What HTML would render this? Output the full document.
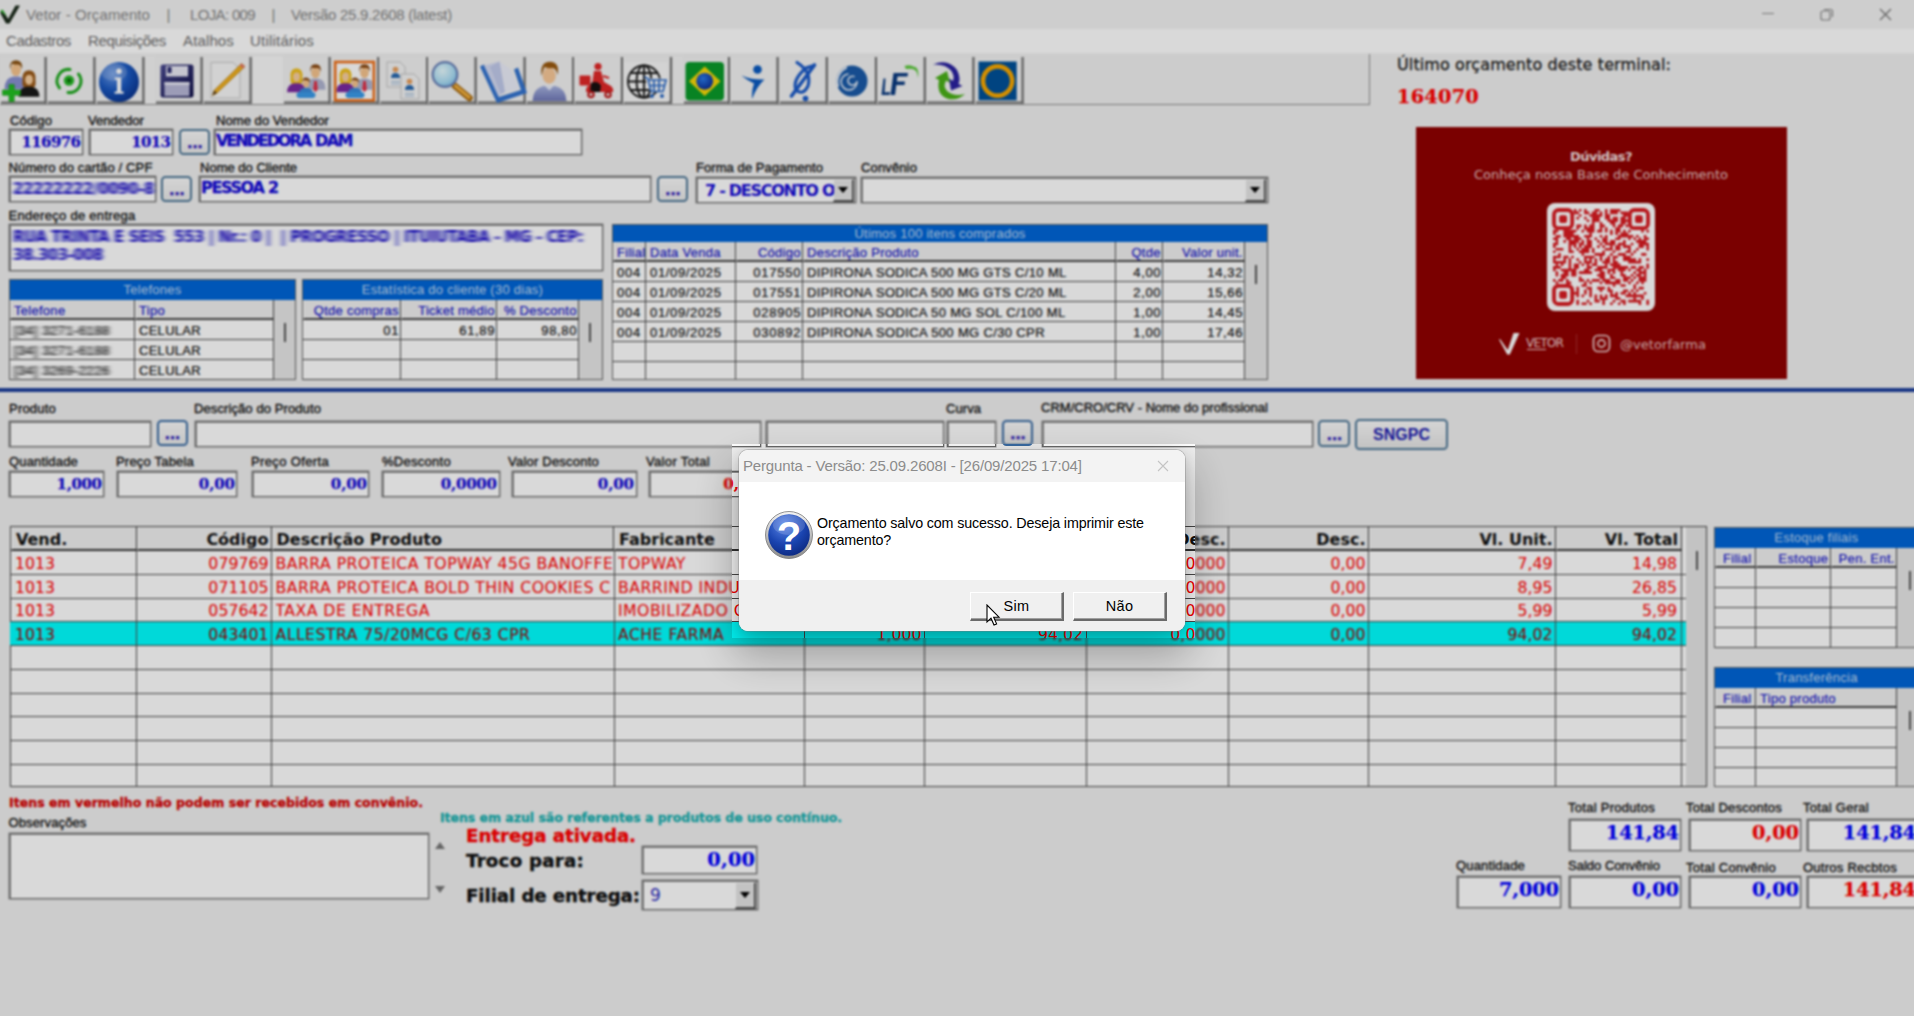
<!DOCTYPE html>
<html lang="pt-BR"><head><meta charset="utf-8"><title>Vetor - Orçamento</title>
<style>
html,body{margin:0;padding:0;width:1914px;height:1016px;overflow:hidden;background:#ccc}
#bg,#holein{position:absolute;left:0;top:0;width:1914px;height:1016px;display:block}
#bg{filter:blur(1.15px)}
#bg div,#bg span,#holein div,#holein span{position:absolute;box-sizing:border-box;white-space:nowrap}
#bg svg,#hole svg{display:block}
#dim{position:absolute;left:0;top:0;width:1914px;height:1016px;background:rgba(0,0,0,.15)}
#hole{position:absolute;left:732px;top:444px;width:463px;height:194px;overflow:hidden}
#holein{left:-732px;top:-444px}

#shadow{position:absolute;left:739px;top:450px;width:446px;height:181px;border-radius:9px;box-shadow:0 20px 42px 6px rgba(0,0,0,.27),0 4px 14px rgba(0,0,0,.16)}
#dlg{position:absolute;left:739px;top:450px;width:446px;height:181px;border-radius:9px;overflow:hidden;background:#fff;font-family:"Liberation Sans",sans-serif;box-shadow:0 0 0 1px rgba(120,120,120,.35)}
#dlg .tb{position:absolute;left:0;top:0;width:446px;height:32px;background:#f3f3f3}
#dlg .tt{position:absolute;left:4px;top:8px;font-size:15px;line-height:16px;color:#8c8c8c;white-space:nowrap;letter-spacing:-.16px}
#dlg .ft{position:absolute;left:0;top:130px;width:446px;height:51px;background:#f0f0f0}
#dlg .msg{position:absolute;left:78px;top:65px;font-size:14.3px;line-height:16.5px;color:#000;white-space:nowrap;letter-spacing:-.14px}
#dlg .btn{position:absolute;top:142px;width:94px;height:28.5px;box-sizing:border-box;background:#f0f0f0;border-top:1px solid #fff;border-left:1px solid #fff;border-right:2px solid #6a6a6a;border-bottom:2px solid #6a6a6a;box-shadow:inset -1px -1px 0 #a0a0a0;font-size:14.5px;line-height:26px;text-align:center;color:#000;letter-spacing:.3px}
</style></head><body>
<svg width="0" height="0" style="position:absolute"><defs><filter id="smear" x="-5%" y="-30%" width="110%" height="160%"><feGaussianBlur stdDeviation="2.3 0.6"/></filter><filter id="smear2" x="-5%" y="-30%" width="110%" height="160%"><feGaussianBlur stdDeviation="1.9 0.5"/></filter></defs></svg>
<div id="bg">
<div style="left:-20px;top:-20px;width:1954px;height:49px;background:#f3f3f3"></div>
<div style="left:-20px;top:29px;width:1954px;height:22.5px;background:#fff"></div>
<div style="left:-20px;top:51.5px;width:1954px;height:984px;background:#f0f0f0"></div>
<div style="left:-20px;top:51.5px;width:1954px;height:3.5px;background:linear-gradient(#fff,#f0f0f0)"></div>
<div style="left:0px;top:3px;width:22px;height:22px"><svg width="22" height="22" viewBox="0 0 22 22"><path d="M0 9.5L3 8L8.2 16L15.5 2.5H20L9.5 20.5H6Z" fill="#1b2a1b"/><path d="M0 8L2.6 6.5L7 13.5Z" fill="#35b035"/></svg></div>
<span style='left:26px;top:7px;font:15px/1 "Liberation Sans",sans-serif;color:#858585;letter-spacing:0.085px;'>Vetor - Orçamento</span>
<span style='left:166.5px;top:7px;font:15px/1 "Liberation Sans",sans-serif;color:#858585;letter-spacing:0.094px;'>|</span>
<span style='left:190px;top:7px;font:15px/1 "Liberation Sans",sans-serif;color:#858585;letter-spacing:-0.655px;'>LOJA: 009</span>
<span style='left:271.5px;top:7px;font:15px/1 "Liberation Sans",sans-serif;color:#858585;letter-spacing:0.094px;'>|</span>
<span style='left:291px;top:7px;font:15px/1 "Liberation Sans",sans-serif;color:#858585;letter-spacing:-0.264px;'>Versão 25.9.2608 (latest)</span>
<div style="left:1755px;top:4px;width:150px;height:22px"><svg width="150" height="22"><path d="M7 9.5H19" stroke="#9a9a9a" stroke-width="1.2" fill="none"/><rect x="66" y="7" width="9" height="9" rx="2" fill="none" stroke="#888" stroke-width="1.2"/><path d="M69 5.5H75.5Q77.5 5.5 77.5 7.5V13" fill="none" stroke="#888" stroke-width="1.2"/><path d="M125 5L136 16M136 5L125 16" stroke="#777" stroke-width="1.3" fill="none"/></svg></div>
<span style='left:6px;top:33px;font:15px/1 "Liberation Sans",sans-serif;color:#707070;letter-spacing:-0.375px;'>Cadastros</span>
<span style='left:88px;top:33px;font:15px/1 "Liberation Sans",sans-serif;color:#707070;letter-spacing:-0.338px;'>Requisições</span>
<span style='left:183px;top:33px;font:15px/1 "Liberation Sans",sans-serif;color:#707070;letter-spacing:0.136px;'>Atalhos</span>
<span style='left:250px;top:33px;font:15px/1 "Liberation Sans",sans-serif;color:#707070;letter-spacing:0.210px;'>Utilitários</span>
<div style="left:0px;top:54px;width:1370px;height:51px;border-right:1px solid #8c8c8c;border-bottom:1px solid #8c8c8c;box-sizing:border-box"></div>
<div style="left:252.5px;top:56px;width:30px;height:48px;background:#f9f9f9"></div>
<div style="left:145px;top:56px;width:10px;height:48px;background:#f5f5f5"></div>
<div style="left:673px;top:56px;width:10px;height:48px;background:#f5f5f5"></div>
<div style="left:0px;top:54px;width:1030px;height:54px"><svg width="1030" height="54" viewBox="0 54 1030 54"><defs><radialGradient id="gi" cx=".35" cy=".3" r=".8"><stop offset="0" stop-color="#6a9ae8"/><stop offset=".5" stop-color="#1a58c0"/><stop offset="1" stop-color="#08308a"/></radialGradient><radialGradient id="gl" cx=".4" cy=".35" r=".7"><stop offset="0" stop-color="#e8fbff"/><stop offset=".7" stop-color="#a8dcf4"/><stop offset="1" stop-color="#78b8e8"/></radialGradient><linearGradient id="gf" x1="0" y1="0" x2="1" y2="1"><stop offset="0" stop-color="#4c4c92"/><stop offset="1" stop-color="#0c0c44"/></linearGradient><linearGradient id="gb" x1="0" y1="0" x2="0" y2="1"><stop offset="0" stop-color="#a8b4e0"/><stop offset="1" stop-color="#7078b8"/></linearGradient><radialGradient id="gbr" cx=".4" cy=".35" r=".7"><stop offset="0" stop-color="#2a7ae8"/><stop offset="1" stop-color="#0a2a90"/></radialGradient></defs><rect x="0" y="57" width="46.6" height="46.5" fill="#f2f2f2"/><path d="M45.6 57V103.5" stroke="#6e6e6e" stroke-width="2.2"/><path d="M1 102.6H46.6" stroke="#6e6e6e" stroke-width="2"/><rect x="47" y="57" width="48.400000000000006" height="46.5" fill="#f2f2f2"/><path d="M94.4 57V103.5" stroke="#6e6e6e" stroke-width="2.2"/><path d="M48 102.6H95.4" stroke="#6e6e6e" stroke-width="2"/><rect x="96" y="57" width="48.400000000000006" height="46.5" fill="#f2f2f2"/><path d="M143.4 57V103.5" stroke="#6e6e6e" stroke-width="2.2"/><path d="M97 102.6H144.4" stroke="#6e6e6e" stroke-width="2"/><rect x="155" y="57" width="47.599999999999994" height="46.5" fill="#f2f2f2"/><path d="M201.6 57V103.5" stroke="#6e6e6e" stroke-width="2.2"/><path d="M156 102.6H202.6" stroke="#6e6e6e" stroke-width="2"/><rect x="203" y="57" width="48.599999999999994" height="46.5" fill="#f2f2f2"/><path d="M250.6 57V103.5" stroke="#6e6e6e" stroke-width="2.2"/><path d="M204 102.6H251.6" stroke="#6e6e6e" stroke-width="2"/><rect x="283" y="57" width="47.60000000000002" height="46.5" fill="#f2f2f2"/><path d="M329.6 57V103.5" stroke="#6e6e6e" stroke-width="2.2"/><path d="M284 102.6H330.6" stroke="#6e6e6e" stroke-width="2"/><rect x="331" y="57" width="48.19999999999999" height="46.5" fill="#f2f2f2"/><path d="M378.2 57V103.5" stroke="#6e6e6e" stroke-width="2.2"/><path d="M332 102.6H379.2" stroke="#6e6e6e" stroke-width="2"/><rect x="379.5" y="57" width="48.69999999999999" height="46.5" fill="#f2f2f2"/><path d="M427.2 57V103.5" stroke="#6e6e6e" stroke-width="2.2"/><path d="M380.5 102.6H428.2" stroke="#6e6e6e" stroke-width="2"/><rect x="428" y="57" width="48.60000000000002" height="46.5" fill="#f2f2f2"/><path d="M475.6 57V103.5" stroke="#6e6e6e" stroke-width="2.2"/><path d="M429 102.6H476.6" stroke="#6e6e6e" stroke-width="2"/><rect x="477" y="57" width="48.60000000000002" height="46.5" fill="#f2f2f2"/><path d="M524.6 57V103.5" stroke="#6e6e6e" stroke-width="2.2"/><path d="M478 102.6H525.6" stroke="#6e6e6e" stroke-width="2"/><rect x="526" y="57" width="48.200000000000045" height="46.5" fill="#f2f2f2"/><path d="M573.2 57V103.5" stroke="#6e6e6e" stroke-width="2.2"/><path d="M527 102.6H574.2" stroke="#6e6e6e" stroke-width="2"/><rect x="574" y="57" width="49" height="46.5" fill="#f2f2f2"/><path d="M622 57V103.5" stroke="#6e6e6e" stroke-width="2.2"/><path d="M575 102.6H623" stroke="#6e6e6e" stroke-width="2"/><rect x="623" y="57" width="49" height="46.5" fill="#f2f2f2"/><path d="M671 57V103.5" stroke="#6e6e6e" stroke-width="2.2"/><path d="M624 102.6H672" stroke="#6e6e6e" stroke-width="2"/><rect x="683" y="57" width="47" height="46.5" fill="#f2f2f2"/><path d="M729 57V103.5" stroke="#6e6e6e" stroke-width="2.2"/><path d="M684 102.6H730" stroke="#6e6e6e" stroke-width="2"/><rect x="730" y="57" width="48.60000000000002" height="46.5" fill="#f2f2f2"/><path d="M777.6 57V103.5" stroke="#6e6e6e" stroke-width="2.2"/><path d="M731 102.6H778.6" stroke="#6e6e6e" stroke-width="2"/><rect x="779" y="57" width="48.799999999999955" height="46.5" fill="#f2f2f2"/><path d="M826.8 57V103.5" stroke="#6e6e6e" stroke-width="2.2"/><path d="M780 102.6H827.8" stroke="#6e6e6e" stroke-width="2"/><rect x="828" y="57" width="49" height="46.5" fill="#f2f2f2"/><path d="M876 57V103.5" stroke="#6e6e6e" stroke-width="2.2"/><path d="M829 102.6H877" stroke="#6e6e6e" stroke-width="2"/><rect x="877" y="57" width="48.799999999999955" height="46.5" fill="#f2f2f2"/><path d="M924.8 57V103.5" stroke="#6e6e6e" stroke-width="2.2"/><path d="M878 102.6H925.8" stroke="#6e6e6e" stroke-width="2"/><rect x="926" y="57" width="48.39999999999998" height="46.5" fill="#f2f2f2"/><path d="M973.4 57V103.5" stroke="#6e6e6e" stroke-width="2.2"/><path d="M927 102.6H974.4" stroke="#6e6e6e" stroke-width="2"/><rect x="975" y="57" width="48.60000000000002" height="46.5" fill="#f2f2f2"/><path d="M1022.6 57V103.5" stroke="#6e6e6e" stroke-width="2.2"/><path d="M976 102.6H1023.6" stroke="#6e6e6e" stroke-width="2"/><g transform="translate(16 61) scale(1.05)">
<path d="M-11 27Q-11 16 -3 15H3Q11 16 11 27Z" fill="#8890d0"/>
<path d="M-3 15L0 19L3 15Z" fill="#8890d0"/>
<ellipse cx="0" cy="8.3" rx="4.7" ry="6" fill="#f6c48e"/>
<path d="M-5.6 8Q-6.8 -0.6 0 -0.8Q7 -0.6 5.6 8Q5 3.6 2 3.3Q-2.6 3.6 -4 2.6Q-5.2 5 -5.6 8Z" fill="#8a5212"/>
</g><g transform="translate(29 71) scale(0.95)">
<path d="M-6.8 10Q-8 -0.6 0 -0.8Q8 -0.6 6.8 10Q7.6 15.5 5 17.5H-5Q-7.6 15.5 -6.8 10Z" fill="#9a5a1a"/>
<path d="M-11 27Q-11 18 -3 16.5H3Q11 18 11 27Z" fill="#181818"/>
<ellipse cx="0" cy="9" rx="4.1" ry="5.6" fill="#f8cfa0"/>
<path d="M-4.3 7Q-2.6 2.4 4.2 4.6Q2.6 1 0 1.2Q-4.3 1.4 -4.3 7Z" fill="#9a5a1a"/>
</g><path d="M9 84.5h5.2v5.5h6.3v5.2h-6.3v6.3h-5.2v-6.3h-6.5v-5.2h6.5z" fill="#22c022" stroke="#109010" stroke-width=".6"/><g fill="none" stroke="#22aa22" stroke-width="3" stroke-linecap="round"><path d="M59.5 88A11.5 11.5 0 0 1 70 69.5"/><path d="M78.5 74A11.5 11.5 0 0 1 68 92.5"/></g><circle cx="69" cy="80.5" r="5.2" fill="#28b828"/><circle cx="69" cy="80.5" r="2" fill="#0a6a0a"/><circle cx="119" cy="82" r="20" fill="url(#gi)"/><ellipse cx="114" cy="72" rx="13" ry="9" fill="#fff" opacity=".18"/><circle cx="119" cy="71.3" r="2.7" fill="#fff"/><path d="M114.8 77.5H121.2V91.5H123.6V93.8H114.6V91.5H117V79.8H114.8Z" fill="#fff"/><rect x="160.5" y="64.5" width="33" height="33" rx="2.5" fill="url(#gf)"/><rect x="166" y="66" width="22" height="10.5" fill="#e8e8f4"/><rect x="167.5" y="67" width="4" height="6" fill="#2a2a70"/><rect x="164.5" y="82" width="25" height="14" fill="#b8b8d8"/><rect x="164.5" y="82" width="25" height="3" fill="#e6e6f4"/><path d="M211 62.5H233L240 69V98H211Z" fill="#f7f7f7" stroke="#bdbdbd" stroke-width=".8"/><path d="M241.5 63.5L245 66.5L217 93L212.5 95.5L214 90.5Z" fill="#f0b020" stroke="#b07810" stroke-width=".7"/><path d="M241.5 63.5L245 66.5L243 68.5L239.5 65.5Z" fill="#e87868"/><path d="M212.5 95.5L214 90.5L217 93Z" fill="#5a4020"/><g transform="translate(296.5 69) scale(0.86)">
<path d="M-6.8 10Q-8 -0.6 0 -0.8Q8 -0.6 6.8 10Q7.6 15.5 5 17.5H-5Q-7.6 15.5 -6.8 10Z" fill="#f0c020"/>
<path d="M-11 27Q-11 18 -3 16.5H3Q11 18 11 27Z" fill="#7a2aa0"/>
<ellipse cx="0" cy="9" rx="4.1" ry="5.6" fill="#f8cfa0"/>
<path d="M-4.3 7Q-2.6 2.4 4.2 4.6Q2.6 1 0 1.2Q-4.3 1.4 -4.3 7Z" fill="#f0c020"/>
</g><g><g transform="translate(315.5 65) scale(0.92)">
<path d="M-11 27Q-11 16 -3 15H3Q11 16 11 27Z" fill="#b0b4d0"/>
<path d="M-3 15L0 19L3 15Z" fill="#b0b4d0"/>
<ellipse cx="0" cy="8.3" rx="4.7" ry="6" fill="#f6c48e"/>
<path d="M-5.6 8Q-6.8 -0.6 0 -0.8Q7 -0.6 5.6 8Q5 3.6 2 3.3Q-2.6 3.6 -4 2.6Q-5.2 5 -5.6 8Z" fill="#8a4a14"/>
</g><path d="M314.2 81H316.8L317.8 89.5L315.5 92L313.2 89.5Z" fill="#e03048"/></g><g transform="translate(306 78) scale(0.66)">
<path d="M-11 27Q-11 16 -3 15H3Q11 16 11 27Z" fill="#3a8ad8"/>
<path d="M-3 15L0 19L3 15Z" fill="#3a8ad8"/>
<ellipse cx="0" cy="8.3" rx="4.7" ry="6" fill="#f6c48e"/>
<path d="M-5.6 8Q-6.8 -0.6 0 -0.8Q7 -0.6 5.6 8Q5 3.6 2 3.3Q-2.6 3.6 -4 2.6Q-5.2 5 -5.6 8Z" fill="#8a4a14"/>
</g><rect x="296.5" y="92.3" width="19" height="5.6" rx="2.8" fill="#3a9ae8"/><rect x="335.2" y="62" width="38.6" height="38.4" fill="#fff" stroke="#f07018" stroke-width="2.6"/><clipPath id="fc"><rect x="336.5" y="63.3" width="36" height="35.8"/></clipPath><g clip-path="url(#fc)"><g transform="translate(345.5 69) scale(0.86)">
<path d="M-6.8 10Q-8 -0.6 0 -0.8Q8 -0.6 6.8 10Q7.6 15.5 5 17.5H-5Q-7.6 15.5 -6.8 10Z" fill="#f0c020"/>
<path d="M-11 27Q-11 18 -3 16.5H3Q11 18 11 27Z" fill="#7a2aa0"/>
<ellipse cx="0" cy="9" rx="4.1" ry="5.6" fill="#f8cfa0"/>
<path d="M-4.3 7Q-2.6 2.4 4.2 4.6Q2.6 1 0 1.2Q-4.3 1.4 -4.3 7Z" fill="#f0c020"/>
</g><g><g transform="translate(364.5 65) scale(0.92)">
<path d="M-11 27Q-11 16 -3 15H3Q11 16 11 27Z" fill="#b0b4d0"/>
<path d="M-3 15L0 19L3 15Z" fill="#b0b4d0"/>
<ellipse cx="0" cy="8.3" rx="4.7" ry="6" fill="#f6c48e"/>
<path d="M-5.6 8Q-6.8 -0.6 0 -0.8Q7 -0.6 5.6 8Q5 3.6 2 3.3Q-2.6 3.6 -4 2.6Q-5.2 5 -5.6 8Z" fill="#8a4a14"/>
</g><path d="M363.2 81H365.8L366.8 89.5L364.5 92L362.2 89.5Z" fill="#e03048"/></g><g transform="translate(355 78) scale(0.66)">
<path d="M-11 27Q-11 16 -3 15H3Q11 16 11 27Z" fill="#3a8ad8"/>
<path d="M-3 15L0 19L3 15Z" fill="#3a8ad8"/>
<ellipse cx="0" cy="8.3" rx="4.7" ry="6" fill="#f6c48e"/>
<path d="M-5.6 8Q-6.8 -0.6 0 -0.8Q7 -0.6 5.6 8Q5 3.6 2 3.3Q-2.6 3.6 -4 2.6Q-5.2 5 -5.6 8Z" fill="#8a4a14"/>
</g><rect x="345.5" y="92.3" width="19" height="5.6" rx="2.8" fill="#3a9ae8"/></g><path d="M387 62H400L405 67V87H387Z" fill="#f4f4f4" stroke="#b8b8b8" stroke-width=".8"/><circle cx="395.5" cy="69.5" r="2.8" fill="#e8a060"/><path d="M391 78Q391 73 395.5 73Q400 73 400 78Z" fill="#2a6ab0"/><path d="M391 81.5H400M391 84H400" stroke="#9ab8d8" stroke-width="1"/><path d="M401 74H414L419 79V99H401Z" fill="#f4f4f4" stroke="#b8b8b8" stroke-width=".8"/><circle cx="409.5" cy="81.5" r="2.8" fill="#e8a060"/><path d="M405 90Q405 85 409.5 85Q414 85 414 90Z" fill="#2a6ab0"/><path d="M405 93.5H414M405 96H414" stroke="#9ab8d8" stroke-width="1"/><path d="M455 86L469.5 98" stroke="#a86a10" stroke-width="6.5" stroke-linecap="round"/><path d="M455.5 86L469 97.3" stroke="#f0b040" stroke-width="3.2" stroke-linecap="round"/><circle cx="445" cy="74.5" r="12.3" fill="url(#gl)" stroke="#6a82b8" stroke-width="2.2"/><path d="M480 66.5L484 64.5L499 97L521 90L514 69.5L518 67.5L527 93L497 103Z" fill="#3474d0"/><path d="M484 65.5L499.5 61.5L505 92L498.5 96.5Z" fill="#d4daf2"/><path d="M499.5 61.5L510 68.5L519.5 89L505 92Z" fill="#eceef9"/><path d="M490 67L499.5 61.5L505 92L501 94Z" fill="#bcc6ea" opacity=".8"/><path d="M532.5 101Q533 88.5 543 86H555.5Q566 88.5 566.5 101Z" fill="url(#gb)"/><path d="M545 86L549.3 90.5L553.5 86Z" fill="#e8ecf8"/><ellipse cx="549.2" cy="75.5" rx="6.6" ry="8.2" fill="#f8c898"/><path d="M541.6 76Q539.5 62 550 61.8Q560 62 557.6 75Q556.5 68.5 552.5 68Q546.5 68.5 544.5 67Q542.6 71 541.6 76Z" fill="#9a5a10"/><g fill="#e02828"><rect x="579.5" y="75.5" width="11" height="10" rx="1"/><circle cx="598" cy="66.5" r="3.6"/><path d="M594 71H601L604 82L611 86Q614 89 613 92H586Q585 86 592 84Z"/><path d="M603 76L609 78" stroke="#e02828" stroke-width="2"/></g><path d="M591 83Q598 80 601 86L600 92H590Z" fill="#181010"/><circle cx="591" cy="94.5" r="3.8" fill="#c02020"/><circle cx="608" cy="94.5" r="3.8" fill="#c02020"/><circle cx="591" cy="94.5" r="1.5" fill="#eee"/><circle cx="608" cy="94.5" r="1.5" fill="#eee"/><rect x="624" y="62" width="44" height="40" fill="#f8f8f8"/><g fill="none" stroke="#1a1a1a" stroke-width="1.9"><circle cx="644" cy="81.5" r="16"/><ellipse cx="644" cy="81.5" rx="7.5" ry="16"/><path d="M644 65.5V97.5M628 81.5H660M630.5 73H657.5M630.5 90H657.5"/></g><path d="M645 78.5H666L663 91H650Z" fill="#f8f8f8"/><g fill="none" stroke="#2a6ac8" stroke-width="1.7"><path d="M644.5 77L648 78.5L651 91.5H663L666 80H649M654 80.5V91M659 80.5V91M650 85.5H664.5"/></g><circle cx="652" cy="96" r="2" fill="#2a6ac8"/><circle cx="662" cy="96" r="2" fill="#2a6ac8"/><rect x="685.5" y="62" width="38.5" height="38.5" rx="4" fill="#0a9a2a"/><path d="M689 81.3L704.7 66.5L720.5 81.3L704.7 96Z" fill="#f8d808"/><circle cx="704.7" cy="81.3" r="8.4" fill="url(#gbr)"/><circle cx="757.5" cy="69.5" r="4.3" fill="#0a5ac0"/><path d="M741.5 75.5Q752 80 764.5 79.5Q757 86 752 99Q751.5 90 754 83.5Q747 80 741.5 75.5Z" fill="#0a5ac0"/><g fill="none" stroke="#1a5ac8" stroke-linecap="round"><path d="M797 62.5Q812 72 808 86Q803 96 796 90Q792 80 806 68L814 65.5" stroke-width="3.1"/><path d="M814.5 65L791.5 96" stroke-width="3.6"/></g><circle cx="805.5" cy="98.5" r="2.8" fill="#1a5ac8"/><circle cx="852" cy="81" r="15.5" fill="#1a5aa8"/><g fill="none" stroke="#dfe8f4" stroke-width="1.6" stroke-linecap="round"><path d="M854 76.5A4.5 4.5 0 1 0 857 81A8 8 0 1 1 848 74"/><path d="M838 86A15 15 0 0 1 846 68" stroke-width="2.2"/></g><path d="M904.5 66Q914 63 918 72Q915 67.5 906 69Z" fill="#5ac83a"/><path d="M913 69Q917.5 70 918 78Q919.5 70 915 66.5Z" fill="#5ac83a"/><path d="M883.5 78.5L885.5 78.5L884.5 92.5L890 92L889.5 95L881.5 95Z" fill="#0a3a80"/><path d="M893.5 73H908L907.5 76.5H897.5L896.8 81.5H905L904.5 85H896.3L895 95H890.5Z" fill="#0a3a80"/><path d="M933 64.5Q948 58 957 70Q961 78 958.5 84L962.5 86L951 90.5L949 78.5L953 81Q955 76 951 70.5Q945 63.5 933 64.5Z" fill="#2a22a0"/><path d="M947 71L950 83L946.3 80.5Q942.5 86 947 91Q954 97 965 94Q957 101.5 947 98.5Q936 94 939 80L935 78Z" fill="#4ab018"/><rect x="978.5" y="61.5" width="38.2" height="38.8" fill="#005098"/><circle cx="997.6" cy="81" r="14.6" fill="none" stroke="#f8a800" stroke-width="4.6"/></svg></div>
<span style='left:1397px;top:57px;font:16px/1 "DejaVu Sans","Liberation Sans",sans-serif;color:#1c1c1c;letter-spacing:0.111px;-webkit-text-stroke:.3px #1c1c1c;'>Último orçamento deste terminal:</span>
<span style='left:1397px;top:86.5px;font:bold 19.3px/1 "DejaVu Serif","Liberation Serif",serif;color:#ff0000;letter-spacing:0.250px;-webkit-text-stroke:.25px #ff0000;'>164070</span>
<div style="left:1416px;top:127px;width:371px;height:252px;background:#900000"></div>
<span style='left:1570px;top:150px;font:bold 13px/1 "DejaVu Sans","Liberation Sans",sans-serif;color:#f4e4e4;letter-spacing:-0.543px;'>Dúvidas?</span>
<span style='left:1474px;top:168px;font:13px/1 "DejaVu Sans","Liberation Sans",sans-serif;color:#e6c8c8;letter-spacing:0.030px;'>Conheça nossa Base de Conhecimento</span>
<div style="left:1547px;top:203px;width:108px;height:108px"><svg width="108" height="108"><rect x="0" y="0" width="108" height="108" rx="8" fill="#fff"/><path d="M6.0 26.8h2.6v2.6h-2.6zM6.0 29.4h2.6v2.6h-2.6zM6.0 34.5h2.6v2.6h-2.6zM6.0 39.7h2.6v2.6h-2.6zM6.0 42.3h2.6v2.6h-2.6zM6.0 47.5h2.6v2.6h-2.6zM6.0 52.7h2.6v2.6h-2.6zM6.0 55.3h2.6v2.6h-2.6zM6.0 57.9h2.6v2.6h-2.6zM6.0 63.1h2.6v2.6h-2.6zM6.0 65.7h2.6v2.6h-2.6zM6.0 76.1h2.6v2.6h-2.6zM8.6 26.8h2.6v2.6h-2.6zM8.6 31.9h2.6v2.6h-2.6zM8.6 34.5h2.6v2.6h-2.6zM8.6 37.1h2.6v2.6h-2.6zM8.6 39.7h2.6v2.6h-2.6zM8.6 44.9h2.6v2.6h-2.6zM8.6 52.7h2.6v2.6h-2.6zM8.6 57.9h2.6v2.6h-2.6zM8.6 60.5h2.6v2.6h-2.6zM8.6 63.1h2.6v2.6h-2.6zM8.6 68.3h2.6v2.6h-2.6zM8.6 70.9h2.6v2.6h-2.6zM8.6 78.6h2.6v2.6h-2.6zM11.2 31.9h2.6v2.6h-2.6zM11.2 44.9h2.6v2.6h-2.6zM11.2 50.1h2.6v2.6h-2.6zM11.2 52.7h2.6v2.6h-2.6zM11.2 57.9h2.6v2.6h-2.6zM11.2 63.1h2.6v2.6h-2.6zM11.2 76.1h2.6v2.6h-2.6zM13.8 44.9h2.6v2.6h-2.6zM13.8 57.9h2.6v2.6h-2.6zM13.8 60.5h2.6v2.6h-2.6zM13.8 65.7h2.6v2.6h-2.6zM13.8 70.9h2.6v2.6h-2.6zM13.8 73.5h2.6v2.6h-2.6zM13.8 76.1h2.6v2.6h-2.6zM16.4 26.8h2.6v2.6h-2.6zM16.4 29.4h2.6v2.6h-2.6zM16.4 31.9h2.6v2.6h-2.6zM16.4 37.1h2.6v2.6h-2.6zM16.4 52.7h2.6v2.6h-2.6zM16.4 55.3h2.6v2.6h-2.6zM16.4 57.9h2.6v2.6h-2.6zM16.4 65.7h2.6v2.6h-2.6zM16.4 68.3h2.6v2.6h-2.6zM16.4 70.9h2.6v2.6h-2.6zM16.4 73.5h2.6v2.6h-2.6zM19.0 26.8h2.6v2.6h-2.6zM19.0 29.4h2.6v2.6h-2.6zM19.0 31.9h2.6v2.6h-2.6zM19.0 34.5h2.6v2.6h-2.6zM19.0 52.7h2.6v2.6h-2.6zM19.0 65.7h2.6v2.6h-2.6zM19.0 68.3h2.6v2.6h-2.6zM19.0 70.9h2.6v2.6h-2.6zM19.0 76.1h2.6v2.6h-2.6zM19.0 78.6h2.6v2.6h-2.6zM21.6 26.8h2.6v2.6h-2.6zM21.6 29.4h2.6v2.6h-2.6zM21.6 31.9h2.6v2.6h-2.6zM21.6 34.5h2.6v2.6h-2.6zM21.6 37.1h2.6v2.6h-2.6zM21.6 39.7h2.6v2.6h-2.6zM21.6 42.3h2.6v2.6h-2.6zM21.6 44.9h2.6v2.6h-2.6zM21.6 47.5h2.6v2.6h-2.6zM21.6 55.3h2.6v2.6h-2.6zM21.6 57.9h2.6v2.6h-2.6zM21.6 60.5h2.6v2.6h-2.6zM21.6 63.1h2.6v2.6h-2.6zM21.6 65.7h2.6v2.6h-2.6zM21.6 78.6h2.6v2.6h-2.6zM24.2 26.8h2.6v2.6h-2.6zM24.2 29.4h2.6v2.6h-2.6zM24.2 31.9h2.6v2.6h-2.6zM24.2 37.1h2.6v2.6h-2.6zM24.2 39.7h2.6v2.6h-2.6zM24.2 47.5h2.6v2.6h-2.6zM24.2 52.7h2.6v2.6h-2.6zM24.2 65.7h2.6v2.6h-2.6zM24.2 68.3h2.6v2.6h-2.6zM24.2 70.9h2.6v2.6h-2.6zM26.8 6.0h2.6v2.6h-2.6zM26.8 8.6h2.6v2.6h-2.6zM26.8 26.8h2.6v2.6h-2.6zM26.8 31.9h2.6v2.6h-2.6zM26.8 34.5h2.6v2.6h-2.6zM26.8 37.1h2.6v2.6h-2.6zM26.8 39.7h2.6v2.6h-2.6zM26.8 42.3h2.6v2.6h-2.6zM26.8 60.5h2.6v2.6h-2.6zM26.8 63.1h2.6v2.6h-2.6zM26.8 65.7h2.6v2.6h-2.6zM26.8 68.3h2.6v2.6h-2.6zM26.8 70.9h2.6v2.6h-2.6zM26.8 89.0h2.6v2.6h-2.6zM29.4 8.6h2.6v2.6h-2.6zM29.4 13.8h2.6v2.6h-2.6zM29.4 21.6h2.6v2.6h-2.6zM29.4 24.2h2.6v2.6h-2.6zM29.4 31.9h2.6v2.6h-2.6zM29.4 34.5h2.6v2.6h-2.6zM29.4 37.1h2.6v2.6h-2.6zM29.4 44.9h2.6v2.6h-2.6zM29.4 55.3h2.6v2.6h-2.6zM29.4 60.5h2.6v2.6h-2.6zM29.4 63.1h2.6v2.6h-2.6zM29.4 83.8h2.6v2.6h-2.6zM29.4 86.4h2.6v2.6h-2.6zM29.4 89.0h2.6v2.6h-2.6zM29.4 91.6h2.6v2.6h-2.6zM29.4 96.8h2.6v2.6h-2.6zM29.4 99.4h2.6v2.6h-2.6zM31.9 6.0h2.6v2.6h-2.6zM31.9 11.2h2.6v2.6h-2.6zM31.9 21.6h2.6v2.6h-2.6zM31.9 34.5h2.6v2.6h-2.6zM31.9 39.7h2.6v2.6h-2.6zM31.9 42.3h2.6v2.6h-2.6zM31.9 47.5h2.6v2.6h-2.6zM31.9 57.9h2.6v2.6h-2.6zM31.9 68.3h2.6v2.6h-2.6zM31.9 73.5h2.6v2.6h-2.6zM31.9 76.1h2.6v2.6h-2.6zM34.5 26.8h2.6v2.6h-2.6zM34.5 37.1h2.6v2.6h-2.6zM34.5 39.7h2.6v2.6h-2.6zM34.5 44.9h2.6v2.6h-2.6zM34.5 47.5h2.6v2.6h-2.6zM34.5 50.1h2.6v2.6h-2.6zM34.5 60.5h2.6v2.6h-2.6zM34.5 68.3h2.6v2.6h-2.6zM34.5 76.1h2.6v2.6h-2.6zM34.5 81.2h2.6v2.6h-2.6zM34.5 91.6h2.6v2.6h-2.6zM34.5 99.4h2.6v2.6h-2.6zM37.1 6.0h2.6v2.6h-2.6zM37.1 8.6h2.6v2.6h-2.6zM37.1 13.8h2.6v2.6h-2.6zM37.1 21.6h2.6v2.6h-2.6zM37.1 24.2h2.6v2.6h-2.6zM37.1 31.9h2.6v2.6h-2.6zM37.1 42.3h2.6v2.6h-2.6zM37.1 44.9h2.6v2.6h-2.6zM37.1 47.5h2.6v2.6h-2.6zM37.1 52.7h2.6v2.6h-2.6zM37.1 55.3h2.6v2.6h-2.6zM37.1 57.9h2.6v2.6h-2.6zM37.1 65.7h2.6v2.6h-2.6zM37.1 68.3h2.6v2.6h-2.6zM37.1 78.6h2.6v2.6h-2.6zM37.1 81.2h2.6v2.6h-2.6zM37.1 86.4h2.6v2.6h-2.6zM37.1 89.0h2.6v2.6h-2.6zM37.1 99.4h2.6v2.6h-2.6zM39.7 8.6h2.6v2.6h-2.6zM39.7 16.4h2.6v2.6h-2.6zM39.7 24.2h2.6v2.6h-2.6zM39.7 26.8h2.6v2.6h-2.6zM39.7 31.9h2.6v2.6h-2.6zM39.7 34.5h2.6v2.6h-2.6zM39.7 37.1h2.6v2.6h-2.6zM39.7 39.7h2.6v2.6h-2.6zM39.7 42.3h2.6v2.6h-2.6zM39.7 44.9h2.6v2.6h-2.6zM39.7 47.5h2.6v2.6h-2.6zM39.7 52.7h2.6v2.6h-2.6zM39.7 57.9h2.6v2.6h-2.6zM39.7 60.5h2.6v2.6h-2.6zM39.7 63.1h2.6v2.6h-2.6zM39.7 65.7h2.6v2.6h-2.6zM39.7 68.3h2.6v2.6h-2.6zM39.7 76.1h2.6v2.6h-2.6zM39.7 83.8h2.6v2.6h-2.6zM39.7 96.8h2.6v2.6h-2.6zM42.3 11.2h2.6v2.6h-2.6zM42.3 21.6h2.6v2.6h-2.6zM42.3 24.2h2.6v2.6h-2.6zM42.3 26.8h2.6v2.6h-2.6zM42.3 29.4h2.6v2.6h-2.6zM42.3 31.9h2.6v2.6h-2.6zM42.3 37.1h2.6v2.6h-2.6zM42.3 39.7h2.6v2.6h-2.6zM42.3 42.3h2.6v2.6h-2.6zM42.3 52.7h2.6v2.6h-2.6zM42.3 55.3h2.6v2.6h-2.6zM42.3 57.9h2.6v2.6h-2.6zM42.3 63.1h2.6v2.6h-2.6zM42.3 68.3h2.6v2.6h-2.6zM42.3 78.6h2.6v2.6h-2.6zM42.3 83.8h2.6v2.6h-2.6zM42.3 86.4h2.6v2.6h-2.6zM42.3 89.0h2.6v2.6h-2.6zM42.3 91.6h2.6v2.6h-2.6zM42.3 99.4h2.6v2.6h-2.6zM44.9 8.6h2.6v2.6h-2.6zM44.9 11.2h2.6v2.6h-2.6zM44.9 13.8h2.6v2.6h-2.6zM44.9 16.4h2.6v2.6h-2.6zM44.9 19.0h2.6v2.6h-2.6zM44.9 21.6h2.6v2.6h-2.6zM44.9 24.2h2.6v2.6h-2.6zM44.9 26.8h2.6v2.6h-2.6zM44.9 44.9h2.6v2.6h-2.6zM44.9 47.5h2.6v2.6h-2.6zM44.9 52.7h2.6v2.6h-2.6zM44.9 60.5h2.6v2.6h-2.6zM44.9 76.1h2.6v2.6h-2.6zM47.5 6.0h2.6v2.6h-2.6zM47.5 8.6h2.6v2.6h-2.6zM47.5 11.2h2.6v2.6h-2.6zM47.5 13.8h2.6v2.6h-2.6zM47.5 16.4h2.6v2.6h-2.6zM47.5 34.5h2.6v2.6h-2.6zM47.5 50.1h2.6v2.6h-2.6zM47.5 55.3h2.6v2.6h-2.6zM47.5 57.9h2.6v2.6h-2.6zM47.5 60.5h2.6v2.6h-2.6zM47.5 65.7h2.6v2.6h-2.6zM47.5 76.1h2.6v2.6h-2.6zM47.5 91.6h2.6v2.6h-2.6zM47.5 94.2h2.6v2.6h-2.6zM47.5 96.8h2.6v2.6h-2.6zM50.1 6.0h2.6v2.6h-2.6zM50.1 11.2h2.6v2.6h-2.6zM50.1 13.8h2.6v2.6h-2.6zM50.1 16.4h2.6v2.6h-2.6zM50.1 26.8h2.6v2.6h-2.6zM50.1 37.1h2.6v2.6h-2.6zM50.1 42.3h2.6v2.6h-2.6zM50.1 50.1h2.6v2.6h-2.6zM50.1 63.1h2.6v2.6h-2.6zM50.1 65.7h2.6v2.6h-2.6zM50.1 70.9h2.6v2.6h-2.6zM50.1 76.1h2.6v2.6h-2.6zM50.1 83.8h2.6v2.6h-2.6zM50.1 96.8h2.6v2.6h-2.6zM52.7 8.6h2.6v2.6h-2.6zM52.7 11.2h2.6v2.6h-2.6zM52.7 19.0h2.6v2.6h-2.6zM52.7 21.6h2.6v2.6h-2.6zM52.7 24.2h2.6v2.6h-2.6zM52.7 26.8h2.6v2.6h-2.6zM52.7 31.9h2.6v2.6h-2.6zM52.7 39.7h2.6v2.6h-2.6zM52.7 50.1h2.6v2.6h-2.6zM52.7 52.7h2.6v2.6h-2.6zM52.7 55.3h2.6v2.6h-2.6zM52.7 63.1h2.6v2.6h-2.6zM52.7 65.7h2.6v2.6h-2.6zM52.7 68.3h2.6v2.6h-2.6zM52.7 70.9h2.6v2.6h-2.6zM52.7 73.5h2.6v2.6h-2.6zM52.7 78.6h2.6v2.6h-2.6zM52.7 83.8h2.6v2.6h-2.6zM52.7 86.4h2.6v2.6h-2.6zM52.7 91.6h2.6v2.6h-2.6zM52.7 94.2h2.6v2.6h-2.6zM55.3 21.6h2.6v2.6h-2.6zM55.3 34.5h2.6v2.6h-2.6zM55.3 37.1h2.6v2.6h-2.6zM55.3 42.3h2.6v2.6h-2.6zM55.3 47.5h2.6v2.6h-2.6zM55.3 50.1h2.6v2.6h-2.6zM55.3 57.9h2.6v2.6h-2.6zM55.3 63.1h2.6v2.6h-2.6zM55.3 68.3h2.6v2.6h-2.6zM55.3 70.9h2.6v2.6h-2.6zM55.3 73.5h2.6v2.6h-2.6zM55.3 76.1h2.6v2.6h-2.6zM55.3 83.8h2.6v2.6h-2.6zM55.3 94.2h2.6v2.6h-2.6zM55.3 96.8h2.6v2.6h-2.6zM55.3 99.4h2.6v2.6h-2.6zM57.9 6.0h2.6v2.6h-2.6zM57.9 8.6h2.6v2.6h-2.6zM57.9 11.2h2.6v2.6h-2.6zM57.9 13.8h2.6v2.6h-2.6zM57.9 24.2h2.6v2.6h-2.6zM57.9 26.8h2.6v2.6h-2.6zM57.9 31.9h2.6v2.6h-2.6zM57.9 34.5h2.6v2.6h-2.6zM57.9 37.1h2.6v2.6h-2.6zM57.9 39.7h2.6v2.6h-2.6zM57.9 44.9h2.6v2.6h-2.6zM57.9 55.3h2.6v2.6h-2.6zM57.9 57.9h2.6v2.6h-2.6zM57.9 60.5h2.6v2.6h-2.6zM57.9 63.1h2.6v2.6h-2.6zM57.9 76.1h2.6v2.6h-2.6zM57.9 78.6h2.6v2.6h-2.6zM57.9 91.6h2.6v2.6h-2.6zM57.9 94.2h2.6v2.6h-2.6zM60.5 11.2h2.6v2.6h-2.6zM60.5 13.8h2.6v2.6h-2.6zM60.5 16.4h2.6v2.6h-2.6zM60.5 39.7h2.6v2.6h-2.6zM60.5 44.9h2.6v2.6h-2.6zM60.5 52.7h2.6v2.6h-2.6zM60.5 55.3h2.6v2.6h-2.6zM60.5 57.9h2.6v2.6h-2.6zM60.5 65.7h2.6v2.6h-2.6zM60.5 68.3h2.6v2.6h-2.6zM60.5 76.1h2.6v2.6h-2.6zM60.5 78.6h2.6v2.6h-2.6zM60.5 83.8h2.6v2.6h-2.6zM60.5 86.4h2.6v2.6h-2.6zM63.1 6.0h2.6v2.6h-2.6zM63.1 8.6h2.6v2.6h-2.6zM63.1 16.4h2.6v2.6h-2.6zM63.1 19.0h2.6v2.6h-2.6zM63.1 26.8h2.6v2.6h-2.6zM63.1 29.4h2.6v2.6h-2.6zM63.1 37.1h2.6v2.6h-2.6zM63.1 39.7h2.6v2.6h-2.6zM63.1 42.3h2.6v2.6h-2.6zM63.1 44.9h2.6v2.6h-2.6zM63.1 50.1h2.6v2.6h-2.6zM63.1 60.5h2.6v2.6h-2.6zM63.1 65.7h2.6v2.6h-2.6zM63.1 70.9h2.6v2.6h-2.6zM63.1 73.5h2.6v2.6h-2.6zM63.1 78.6h2.6v2.6h-2.6zM63.1 86.4h2.6v2.6h-2.6zM63.1 89.0h2.6v2.6h-2.6zM63.1 91.6h2.6v2.6h-2.6zM63.1 99.4h2.6v2.6h-2.6zM65.7 6.0h2.6v2.6h-2.6zM65.7 8.6h2.6v2.6h-2.6zM65.7 13.8h2.6v2.6h-2.6zM65.7 16.4h2.6v2.6h-2.6zM65.7 19.0h2.6v2.6h-2.6zM65.7 21.6h2.6v2.6h-2.6zM65.7 37.1h2.6v2.6h-2.6zM65.7 39.7h2.6v2.6h-2.6zM65.7 47.5h2.6v2.6h-2.6zM65.7 52.7h2.6v2.6h-2.6zM65.7 55.3h2.6v2.6h-2.6zM65.7 57.9h2.6v2.6h-2.6zM65.7 60.5h2.6v2.6h-2.6zM65.7 63.1h2.6v2.6h-2.6zM65.7 65.7h2.6v2.6h-2.6zM65.7 68.3h2.6v2.6h-2.6zM65.7 73.5h2.6v2.6h-2.6zM65.7 78.6h2.6v2.6h-2.6zM65.7 81.2h2.6v2.6h-2.6zM65.7 91.6h2.6v2.6h-2.6zM65.7 96.8h2.6v2.6h-2.6zM68.3 6.0h2.6v2.6h-2.6zM68.3 8.6h2.6v2.6h-2.6zM68.3 13.8h2.6v2.6h-2.6zM68.3 16.4h2.6v2.6h-2.6zM68.3 24.2h2.6v2.6h-2.6zM68.3 26.8h2.6v2.6h-2.6zM68.3 29.4h2.6v2.6h-2.6zM68.3 34.5h2.6v2.6h-2.6zM68.3 42.3h2.6v2.6h-2.6zM68.3 44.9h2.6v2.6h-2.6zM68.3 52.7h2.6v2.6h-2.6zM68.3 57.9h2.6v2.6h-2.6zM68.3 60.5h2.6v2.6h-2.6zM68.3 63.1h2.6v2.6h-2.6zM68.3 76.1h2.6v2.6h-2.6zM68.3 78.6h2.6v2.6h-2.6zM68.3 89.0h2.6v2.6h-2.6zM68.3 91.6h2.6v2.6h-2.6zM68.3 94.2h2.6v2.6h-2.6zM70.9 6.0h2.6v2.6h-2.6zM70.9 21.6h2.6v2.6h-2.6zM70.9 24.2h2.6v2.6h-2.6zM70.9 26.8h2.6v2.6h-2.6zM70.9 31.9h2.6v2.6h-2.6zM70.9 34.5h2.6v2.6h-2.6zM70.9 39.7h2.6v2.6h-2.6zM70.9 42.3h2.6v2.6h-2.6zM70.9 44.9h2.6v2.6h-2.6zM70.9 50.1h2.6v2.6h-2.6zM70.9 60.5h2.6v2.6h-2.6zM70.9 63.1h2.6v2.6h-2.6zM70.9 65.7h2.6v2.6h-2.6zM70.9 76.1h2.6v2.6h-2.6zM70.9 78.6h2.6v2.6h-2.6zM70.9 94.2h2.6v2.6h-2.6zM70.9 99.4h2.6v2.6h-2.6zM73.5 8.6h2.6v2.6h-2.6zM73.5 13.8h2.6v2.6h-2.6zM73.5 16.4h2.6v2.6h-2.6zM73.5 19.0h2.6v2.6h-2.6zM73.5 21.6h2.6v2.6h-2.6zM73.5 29.4h2.6v2.6h-2.6zM73.5 31.9h2.6v2.6h-2.6zM73.5 39.7h2.6v2.6h-2.6zM73.5 50.1h2.6v2.6h-2.6zM73.5 63.1h2.6v2.6h-2.6zM73.5 65.7h2.6v2.6h-2.6zM73.5 68.3h2.6v2.6h-2.6zM73.5 70.9h2.6v2.6h-2.6zM73.5 81.2h2.6v2.6h-2.6zM73.5 89.0h2.6v2.6h-2.6zM73.5 96.8h2.6v2.6h-2.6zM76.1 8.6h2.6v2.6h-2.6zM76.1 11.2h2.6v2.6h-2.6zM76.1 13.8h2.6v2.6h-2.6zM76.1 16.4h2.6v2.6h-2.6zM76.1 19.0h2.6v2.6h-2.6zM76.1 26.8h2.6v2.6h-2.6zM76.1 29.4h2.6v2.6h-2.6zM76.1 31.9h2.6v2.6h-2.6zM76.1 37.1h2.6v2.6h-2.6zM76.1 39.7h2.6v2.6h-2.6zM76.1 42.3h2.6v2.6h-2.6zM76.1 50.1h2.6v2.6h-2.6zM76.1 52.7h2.6v2.6h-2.6zM76.1 55.3h2.6v2.6h-2.6zM76.1 63.1h2.6v2.6h-2.6zM76.1 65.7h2.6v2.6h-2.6zM76.1 70.9h2.6v2.6h-2.6zM76.1 73.5h2.6v2.6h-2.6zM76.1 76.1h2.6v2.6h-2.6zM76.1 81.2h2.6v2.6h-2.6zM76.1 86.4h2.6v2.6h-2.6zM76.1 89.0h2.6v2.6h-2.6zM76.1 96.8h2.6v2.6h-2.6zM76.1 99.4h2.6v2.6h-2.6zM78.6 8.6h2.6v2.6h-2.6zM78.6 11.2h2.6v2.6h-2.6zM78.6 16.4h2.6v2.6h-2.6zM78.6 21.6h2.6v2.6h-2.6zM78.6 29.4h2.6v2.6h-2.6zM78.6 31.9h2.6v2.6h-2.6zM78.6 42.3h2.6v2.6h-2.6zM78.6 47.5h2.6v2.6h-2.6zM78.6 52.7h2.6v2.6h-2.6zM78.6 55.3h2.6v2.6h-2.6zM78.6 63.1h2.6v2.6h-2.6zM78.6 73.5h2.6v2.6h-2.6zM78.6 76.1h2.6v2.6h-2.6zM78.6 86.4h2.6v2.6h-2.6zM78.6 91.6h2.6v2.6h-2.6zM81.2 26.8h2.6v2.6h-2.6zM81.2 31.9h2.6v2.6h-2.6zM81.2 34.5h2.6v2.6h-2.6zM81.2 42.3h2.6v2.6h-2.6zM81.2 44.9h2.6v2.6h-2.6zM81.2 47.5h2.6v2.6h-2.6zM81.2 52.7h2.6v2.6h-2.6zM81.2 55.3h2.6v2.6h-2.6zM81.2 57.9h2.6v2.6h-2.6zM81.2 65.7h2.6v2.6h-2.6zM81.2 73.5h2.6v2.6h-2.6zM81.2 78.6h2.6v2.6h-2.6zM81.2 89.0h2.6v2.6h-2.6zM81.2 91.6h2.6v2.6h-2.6zM81.2 96.8h2.6v2.6h-2.6zM83.8 31.9h2.6v2.6h-2.6zM83.8 39.7h2.6v2.6h-2.6zM83.8 50.1h2.6v2.6h-2.6zM83.8 55.3h2.6v2.6h-2.6zM83.8 57.9h2.6v2.6h-2.6zM83.8 63.1h2.6v2.6h-2.6zM83.8 70.9h2.6v2.6h-2.6zM83.8 76.1h2.6v2.6h-2.6zM83.8 86.4h2.6v2.6h-2.6zM83.8 91.6h2.6v2.6h-2.6zM83.8 96.8h2.6v2.6h-2.6zM86.4 34.5h2.6v2.6h-2.6zM86.4 47.5h2.6v2.6h-2.6zM86.4 55.3h2.6v2.6h-2.6zM86.4 57.9h2.6v2.6h-2.6zM86.4 63.1h2.6v2.6h-2.6zM86.4 68.3h2.6v2.6h-2.6zM86.4 73.5h2.6v2.6h-2.6zM86.4 81.2h2.6v2.6h-2.6zM86.4 83.8h2.6v2.6h-2.6zM86.4 89.0h2.6v2.6h-2.6zM86.4 91.6h2.6v2.6h-2.6zM86.4 94.2h2.6v2.6h-2.6zM86.4 96.8h2.6v2.6h-2.6zM89.0 31.9h2.6v2.6h-2.6zM89.0 37.1h2.6v2.6h-2.6zM89.0 44.9h2.6v2.6h-2.6zM89.0 57.9h2.6v2.6h-2.6zM89.0 65.7h2.6v2.6h-2.6zM89.0 70.9h2.6v2.6h-2.6zM89.0 78.6h2.6v2.6h-2.6zM89.0 86.4h2.6v2.6h-2.6zM89.0 91.6h2.6v2.6h-2.6zM89.0 96.8h2.6v2.6h-2.6zM91.6 34.5h2.6v2.6h-2.6zM91.6 37.1h2.6v2.6h-2.6zM91.6 39.7h2.6v2.6h-2.6zM91.6 42.3h2.6v2.6h-2.6zM91.6 55.3h2.6v2.6h-2.6zM91.6 57.9h2.6v2.6h-2.6zM91.6 63.1h2.6v2.6h-2.6zM91.6 65.7h2.6v2.6h-2.6zM91.6 68.3h2.6v2.6h-2.6zM91.6 70.9h2.6v2.6h-2.6zM91.6 73.5h2.6v2.6h-2.6zM91.6 76.1h2.6v2.6h-2.6zM91.6 83.8h2.6v2.6h-2.6zM91.6 91.6h2.6v2.6h-2.6zM91.6 96.8h2.6v2.6h-2.6zM91.6 99.4h2.6v2.6h-2.6zM94.2 26.8h2.6v2.6h-2.6zM94.2 37.1h2.6v2.6h-2.6zM94.2 39.7h2.6v2.6h-2.6zM94.2 42.3h2.6v2.6h-2.6zM94.2 50.1h2.6v2.6h-2.6zM94.2 63.1h2.6v2.6h-2.6zM94.2 68.3h2.6v2.6h-2.6zM94.2 73.5h2.6v2.6h-2.6zM94.2 76.1h2.6v2.6h-2.6zM94.2 78.6h2.6v2.6h-2.6zM94.2 83.8h2.6v2.6h-2.6zM94.2 91.6h2.6v2.6h-2.6zM94.2 94.2h2.6v2.6h-2.6zM96.8 31.9h2.6v2.6h-2.6zM96.8 34.5h2.6v2.6h-2.6zM96.8 37.1h2.6v2.6h-2.6zM96.8 39.7h2.6v2.6h-2.6zM96.8 50.1h2.6v2.6h-2.6zM96.8 65.7h2.6v2.6h-2.6zM96.8 68.3h2.6v2.6h-2.6zM96.8 70.9h2.6v2.6h-2.6zM96.8 73.5h2.6v2.6h-2.6zM96.8 76.1h2.6v2.6h-2.6zM96.8 89.0h2.6v2.6h-2.6zM99.4 26.8h2.6v2.6h-2.6zM99.4 34.5h2.6v2.6h-2.6zM99.4 39.7h2.6v2.6h-2.6zM99.4 42.3h2.6v2.6h-2.6zM99.4 44.9h2.6v2.6h-2.6zM99.4 55.3h2.6v2.6h-2.6zM99.4 60.5h2.6v2.6h-2.6zM99.4 63.1h2.6v2.6h-2.6zM99.4 96.8h2.6v2.6h-2.6zM99.4 99.4h2.6v2.6h-2.6z" fill="#d81c22"/><rect x="7.0" y="7.0" width="18.2" height="18.2" rx="4.5" fill="none" stroke="#d81c22" stroke-width="3.8"/><rect x="12.2" y="12.2" width="7.8" height="7.8" rx="2" fill="#d81c22"/><rect x="82.8" y="7.0" width="18.2" height="18.2" rx="4.5" fill="none" stroke="#d81c22" stroke-width="3.8"/><rect x="88.0" y="12.2" width="7.8" height="7.8" rx="2" fill="#d81c22"/><rect x="7.0" y="82.8" width="18.2" height="18.2" rx="4.5" fill="none" stroke="#d81c22" stroke-width="3.8"/><rect x="12.2" y="88.0" width="7.8" height="7.8" rx="2" fill="#d81c22"/></svg></div>
<div style="left:1496px;top:330px;width:30px;height:26px"><svg width="30" height="26"><path d="M3 9.5L4 9L11.8 20L17.5 3H23.5L13.8 24.5H11.2Z" fill="#fff"/></svg></div>
<span style='left:1526px;top:336.5px;font:12px/1 "DejaVu Sans","Liberation Sans",sans-serif;color:#f0d8d8;letter-spacing:-0.781px;'>VETOR</span>
<div style="left:1527px;top:348.5px;width:19px;height:1.6px;background:#f0d8d8"></div>
<div style="left:1576px;top:334px;width:1px;height:20px;background:#a83030"></div>
<div style="left:1592px;top:334px;width:20px;height:20px"><svg width="20" height="20"><rect x="1.5" y="1.5" width="16" height="16" rx="4.5" fill="none" stroke="#f0d8d8" stroke-width="1.7"/><circle cx="9.5" cy="9.5" r="3.6" fill="none" stroke="#f0d8d8" stroke-width="1.6"/></svg></div>
<span style='left:1620px;top:338px;font:13px/1 "DejaVu Sans","Liberation Sans",sans-serif;color:#e6c0c0;letter-spacing:0.055px;'>@vetorfarma</span>
<span style='left:10px;top:113.7px;font:13px/1 "Liberation Sans",sans-serif;color:#111;letter-spacing:0.133px;-webkit-text-stroke:.35px #111;'>Código</span>
<div style="left:9px;top:129px;width:74px;height:26px;background:#fff;border:1px solid #6b6b6b;box-shadow:inset 1px 1px 0 #9a9a9a,0 0 0 .5px #999"></div>
<span style='left:21.4px;top:134.5px;font:bold 15px/1 "DejaVu Serif","Liberation Serif",serif;color:#160cd8;letter-spacing:-0.604px;-webkit-text-stroke:.25px #160cd8;'>116976</span>
<span style='left:88px;top:113.7px;font:13px/1 "Liberation Sans",sans-serif;color:#111;letter-spacing:0.041px;-webkit-text-stroke:.35px #111;'>Vendedor</span>
<div style="left:89px;top:129px;width:84px;height:26px;background:#fff;border:1px solid #6b6b6b;box-shadow:inset 1px 1px 0 #9a9a9a,0 0 0 .5px #999"></div>
<span style='left:131.31px;top:134.5px;font:bold 15px/1 "DejaVu Serif","Liberation Serif",serif;color:#160cd8;letter-spacing:-0.688px;-webkit-text-stroke:.25px #160cd8;'>1013</span>
<div style="left:179px;top:129px;width:31px;height:26px;background:linear-gradient(#fafafa,#e9e9e9);border:2px solid #4f7898;border-radius:4.5px"></div>
<span style='left:187.3px;top:136.7px;font:bold 13.5px/1 "DejaVu Sans","Liberation Sans",sans-serif;color:#2a18b8;-webkit-text-stroke:.5px #2a18b8;'>...</span>
<span style='left:216px;top:113.7px;font:13px/1 "Liberation Sans",sans-serif;color:#111;letter-spacing:0.061px;-webkit-text-stroke:.35px #111;'>Nome do Vendedor</span>
<div style="left:214px;top:129px;width:368px;height:26px;background:#fff;border:1px solid #6b6b6b;box-shadow:inset 1px 1px 0 #9a9a9a,0 0 0 .5px #999"></div>
<span style='left:216px;top:133px;font:bold 16px/1 "DejaVu Sans","Liberation Sans",sans-serif;color:#160cd8;letter-spacing:-2.056px;-webkit-text-stroke:.3px #160cd8;'>VENDEDORA</span>
<span style='left:315px;top:133px;font:bold 16px/1 "DejaVu Sans","Liberation Sans",sans-serif;color:#160cd8;letter-spacing:-1.531px;-webkit-text-stroke:.3px #160cd8;'>DAM</span>
<span style='left:8.5px;top:161.2px;font:13px/1 "Liberation Sans",sans-serif;color:#111;letter-spacing:0.141px;-webkit-text-stroke:.35px #111;'>Número do cartão / CPF</span>
<div style="left:9px;top:176px;width:147px;height:26px;background:#fff;border:1px solid #6b6b6b;box-shadow:inset 1px 1px 0 #9a9a9a,0 0 0 .5px #999"></div>
<span style='left:13px;top:182px;font:bold 15px/1 "DejaVu Sans","Liberation Sans",sans-serif;color:#0c06c6;letter-spacing:-0.426px;filter:url(#smear);'>22222222/0090-8</span>
<div style="left:161px;top:176px;width:31px;height:26px;background:linear-gradient(#fafafa,#e9e9e9);border:2px solid #4f7898;border-radius:4.5px"></div>
<span style='left:169.3px;top:183.7px;font:bold 13.5px/1 "DejaVu Sans","Liberation Sans",sans-serif;color:#2a18b8;-webkit-text-stroke:.5px #2a18b8;'>...</span>
<span style='left:200px;top:161.2px;font:13px/1 "Liberation Sans",sans-serif;color:#111;letter-spacing:0.011px;-webkit-text-stroke:.35px #111;'>Nome do Cliente</span>
<div style="left:199px;top:176px;width:452px;height:26px;background:#fff;border:1px solid #6b6b6b;box-shadow:inset 1px 1px 0 #9a9a9a,0 0 0 .5px #999"></div>
<span style='left:201px;top:180px;font:bold 16px/1 "DejaVu Sans","Liberation Sans",sans-serif;color:#160cd8;letter-spacing:-1.341px;-webkit-text-stroke:.3px #160cd8;'>PESSOA</span>
<span style='left:268px;top:180px;font:bold 16px/1 "DejaVu Sans","Liberation Sans",sans-serif;color:#160cd8;letter-spacing:-1.141px;-webkit-text-stroke:.3px #160cd8;'>2</span>
<div style="left:657px;top:176px;width:31px;height:26px;background:linear-gradient(#fafafa,#e9e9e9);border:2px solid #4f7898;border-radius:4.5px"></div>
<span style='left:665.3px;top:183.7px;font:bold 13.5px/1 "DejaVu Sans","Liberation Sans",sans-serif;color:#2a18b8;-webkit-text-stroke:.5px #2a18b8;'>...</span>
<span style='left:696px;top:161.2px;font:13px/1 "Liberation Sans",sans-serif;color:#111;letter-spacing:0.070px;-webkit-text-stroke:.35px #111;'>Forma de Pagamento</span>
<div style="left:696px;top:177px;width:160px;height:26px;background:#fff;border:1px solid #6b6b6b;box-shadow:inset 1px 1px 0 #9a9a9a,0 0 0 .5px #999"></div>
<div style="left:833px;top:179px;width:21px;height:23px;background:#e6e6e6;border-right:2px solid #555;border-bottom:2px solid #555;border-top:1px solid #fff;border-left:1px solid #fff"></div>
<div style="left:838px;top:187px;width:10px;height:6px"><svg width="10" height="6" style="display:block"><path d="M0 0H10L5 6Z" fill="#000"/></svg></div>
<span style='left:705px;top:183.3px;font:bold 16px/1 "DejaVu Sans","Liberation Sans",sans-serif;color:#160cd8;letter-spacing:-1.271px;max-width:128.5px;overflow:hidden;'>7 - DESCONTO OU</span>
<span style='left:861px;top:161.2px;font:13px/1 "Liberation Sans",sans-serif;color:#111;letter-spacing:0.133px;-webkit-text-stroke:.35px #111;'>Convênio</span>
<div style="left:861px;top:177px;width:407px;height:26px;background:#fff;border:1px solid #6b6b6b;box-shadow:inset 1px 1px 0 #9a9a9a,0 0 0 .5px #999"></div>
<div style="left:1245px;top:179px;width:21px;height:23px;background:#e6e6e6;border-right:2px solid #555;border-bottom:2px solid #555;border-top:1px solid #fff;border-left:1px solid #fff"></div>
<div style="left:1250px;top:187px;width:10px;height:6px"><svg width="10" height="6" style="display:block"><path d="M0 0H10L5 6Z" fill="#000"/></svg></div>
<span style='left:8.5px;top:208.7px;font:13px/1 "Liberation Sans",sans-serif;color:#111;letter-spacing:0.293px;-webkit-text-stroke:.35px #111;'>Endereço de entrega</span>
<div style="left:9px;top:224px;width:594px;height:47px;background:#fff;border:1px solid #6b6b6b;box-shadow:inset 1px 1px 0 #9a9a9a,0 0 0 .5px #999"></div>
<span style='left:13px;top:230px;font:bold 15px/1 "DejaVu Sans","Liberation Sans",sans-serif;color:#0c06c6;letter-spacing:-0.440px;filter:url(#smear);white-space:pre;'>RUA TRINTA E SEIS  553 | Nr.: 0 |  | PROGRESSO | ITUIUTABA - MG - CEP:</span>
<span style='left:13px;top:247.5px;font:bold 15px/1 "DejaVu Sans","Liberation Sans",sans-serif;color:#0c06c6;letter-spacing:-0.542px;filter:url(#smear);'>38.303-008</span>
<div style="left:9px;top:279px;width:287px;height:101px;background:#fff;border:1px solid #666;box-sizing:border-box"></div>
<div style="left:10px;top:280px;width:285px;height:19.6px;background:#0066d8"></div>
<span style='left:123.55px;top:282.6px;font:13px/1 "Liberation Sans",sans-serif;color:#c4dcf4;letter-spacing:0.250px;'>Telefones</span>
<div style="left:10px;top:299.6px;width:125px;height:20px;background:#f0f0f0;border-right:1.5px solid #444;border-bottom:2px solid #444;border-left:1px solid #fff;box-sizing:border-box"></div>
<span style='left:14px;top:303.6px;font:13px/1 "Liberation Sans",sans-serif;color:#0c0cc8;letter-spacing:0.280px;-webkit-text-stroke:0.15px #0c0cc8;'>Telefone</span>
<div style="left:135px;top:299.6px;width:139px;height:20px;background:#f0f0f0;border-right:1.5px solid #444;border-bottom:2px solid #444;border-left:1px solid #fff;box-sizing:border-box"></div>
<span style='left:139px;top:303.6px;font:13px/1 "Liberation Sans",sans-serif;color:#0c0cc8;letter-spacing:0.280px;-webkit-text-stroke:0.15px #0c0cc8;'>Tipo</span>
<div style="left:274px;top:299.6px;width:21px;height:79.4px;background:#e8e8e8"></div>
<div style="left:284px;top:322.6px;width:2px;height:19px;background:#555"></div>
<div style="left:10px;top:338.6px;width:264px;height:1px;background:#4c4c4c"></div>
<div style="left:10px;top:358.6px;width:264px;height:1px;background:#4c4c4c"></div>
<div style="left:10px;top:378.6px;width:264px;height:1px;background:#4c4c4c"></div>
<div style="left:134px;top:319.6px;width:1px;height:59.4px;background:#4c4c4c"></div>
<div style="left:273px;top:319.6px;width:1px;height:59.4px;background:#4c4c4c"></div>
<span style='left:14px;top:323.6px;font:13px/1 "Liberation Sans",sans-serif;color:#000;letter-spacing:0.616px;-webkit-text-stroke:0.2px #000;filter:url(#smear2);'>[34] 3271-6188</span>
<span style='left:139px;top:323.6px;font:13px/1 "Liberation Sans",sans-serif;color:#111;letter-spacing:0.280px;-webkit-text-stroke:0.2px #111;'>CELULAR</span>
<span style='left:14px;top:343.6px;font:13px/1 "Liberation Sans",sans-serif;color:#000;letter-spacing:0.616px;-webkit-text-stroke:0.2px #000;filter:url(#smear2);'>[34] 3271-6188</span>
<span style='left:139px;top:343.6px;font:13px/1 "Liberation Sans",sans-serif;color:#111;letter-spacing:0.280px;-webkit-text-stroke:0.2px #111;'>CELULAR</span>
<span style='left:14px;top:363.6px;font:13px/1 "Liberation Sans",sans-serif;color:#000;letter-spacing:0.616px;-webkit-text-stroke:0.2px #000;filter:url(#smear2);'>[34] 3269-2226</span>
<span style='left:139px;top:363.6px;font:13px/1 "Liberation Sans",sans-serif;color:#111;letter-spacing:0.280px;-webkit-text-stroke:0.2px #111;'>CELULAR</span>
<div style="left:302px;top:279px;width:301px;height:101px;background:#fff;border:1px solid #666;box-sizing:border-box"></div>
<div style="left:303px;top:280px;width:299px;height:19.6px;background:#0066d8"></div>
<span style='left:361.79px;top:282.6px;font:13px/1 "Liberation Sans",sans-serif;color:#c4dcf4;letter-spacing:0.250px;'>Estatística do cliente (30 dias)</span>
<div style="left:303px;top:299.6px;width:98px;height:20px;background:#f0f0f0;border-right:1.5px solid #444;border-bottom:2px solid #444;border-left:1px solid #fff;box-sizing:border-box"></div>
<span style='left:313.76px;top:303.6px;font:13px/1 "Liberation Sans",sans-serif;color:#0c0cc8;letter-spacing:0.280px;-webkit-text-stroke:0.15px #0c0cc8;'>Qtde compras</span>
<div style="left:401px;top:299.6px;width:96px;height:20px;background:#f0f0f0;border-right:1.5px solid #444;border-bottom:2px solid #444;border-left:1px solid #fff;box-sizing:border-box"></div>
<span style='left:418.2px;top:303.6px;font:13px/1 "Liberation Sans",sans-serif;color:#0c0cc8;letter-spacing:0.280px;-webkit-text-stroke:0.15px #0c0cc8;'>Ticket médio</span>
<div style="left:497px;top:299.6px;width:82px;height:20px;background:#f0f0f0;border-right:1.5px solid #444;border-bottom:2px solid #444;border-left:1px solid #fff;box-sizing:border-box"></div>
<span style='left:503.89px;top:303.6px;font:13px/1 "Liberation Sans",sans-serif;color:#0c0cc8;letter-spacing:0.280px;-webkit-text-stroke:0.15px #0c0cc8;'>% Desconto</span>
<div style="left:579px;top:299.6px;width:23px;height:79.4px;background:#e8e8e8"></div>
<div style="left:589px;top:322.6px;width:2px;height:19px;background:#555"></div>
<div style="left:303px;top:338.6px;width:276px;height:1px;background:#4c4c4c"></div>
<div style="left:303px;top:358.6px;width:276px;height:1px;background:#4c4c4c"></div>
<div style="left:303px;top:378.6px;width:276px;height:1px;background:#4c4c4c"></div>
<div style="left:400px;top:319.6px;width:1px;height:59.4px;background:#4c4c4c"></div>
<div style="left:496px;top:319.6px;width:1px;height:59.4px;background:#4c4c4c"></div>
<div style="left:578px;top:319.6px;width:1px;height:59.4px;background:#4c4c4c"></div>
<span style='left:383.28px;top:323.6px;font:13px/1 "Liberation Sans",sans-serif;color:#111;letter-spacing:0.750px;-webkit-text-stroke:0.2px #111;'>01</span>
<span style='left:459.33px;top:323.6px;font:13px/1 "Liberation Sans",sans-serif;color:#111;letter-spacing:0.656px;-webkit-text-stroke:0.2px #111;'>61,89</span>
<span style='left:541.33px;top:323.6px;font:13px/1 "Liberation Sans",sans-serif;color:#111;letter-spacing:0.656px;-webkit-text-stroke:0.2px #111;'>98,80</span>
<div style="left:612px;top:224px;width:656px;height:156px;background:#fff;border:1px solid #666;box-sizing:border-box"></div>
<div style="left:613px;top:225px;width:654px;height:17px;background:#0066d8"></div>
<span style='left:854.38px;top:227px;font:13px/1 "Liberation Sans",sans-serif;color:#c4dcf4;letter-spacing:0.250px;'>Útimos 100 itens comprados</span>
<div style="left:613px;top:242px;width:33px;height:20px;background:#f0f0f0;border-right:1.5px solid #444;border-bottom:2px solid #444;border-left:1px solid #fff;box-sizing:border-box"></div>
<span style='left:617px;top:246px;font:13px/1 "Liberation Sans",sans-serif;color:#0c0cc8;letter-spacing:0.280px;-webkit-text-stroke:0.15px #0c0cc8;'>Filial</span>
<div style="left:646px;top:242px;width:90px;height:20px;background:#f0f0f0;border-right:1.5px solid #444;border-bottom:2px solid #444;border-left:1px solid #fff;box-sizing:border-box"></div>
<span style='left:650px;top:246px;font:13px/1 "Liberation Sans",sans-serif;color:#0c0cc8;letter-spacing:0.280px;-webkit-text-stroke:0.15px #0c0cc8;'>Data Venda</span>
<div style="left:736px;top:242px;width:67px;height:20px;background:#f0f0f0;border-right:1.5px solid #444;border-bottom:2px solid #444;border-left:1px solid #fff;box-sizing:border-box"></div>
<span style='left:757.9px;top:246px;font:13px/1 "Liberation Sans",sans-serif;color:#0c0cc8;letter-spacing:0.280px;-webkit-text-stroke:0.15px #0c0cc8;'>Código</span>
<div style="left:803px;top:242px;width:313px;height:20px;background:#f0f0f0;border-right:1.5px solid #444;border-bottom:2px solid #444;border-left:1px solid #fff;box-sizing:border-box"></div>
<span style='left:807px;top:246px;font:13px/1 "Liberation Sans",sans-serif;color:#0c0cc8;letter-spacing:0.280px;-webkit-text-stroke:0.15px #0c0cc8;'>Descrição Produto</span>
<div style="left:1116px;top:242px;width:47px;height:20px;background:#f0f0f0;border-right:1.5px solid #444;border-bottom:2px solid #444;border-left:1px solid #fff;box-sizing:border-box"></div>
<span style='left:1131.47px;top:246px;font:13px/1 "Liberation Sans",sans-serif;color:#0c0cc8;letter-spacing:0.280px;-webkit-text-stroke:0.15px #0c0cc8;'>Qtde</span>
<div style="left:1163px;top:242px;width:82px;height:20px;background:#f0f0f0;border-right:1.5px solid #444;border-bottom:2px solid #444;border-left:1px solid #fff;box-sizing:border-box"></div>
<span style='left:1182.12px;top:246px;font:13px/1 "Liberation Sans",sans-serif;color:#0c0cc8;letter-spacing:0.280px;-webkit-text-stroke:0.15px #0c0cc8;'>Valor unit.</span>
<div style="left:1245px;top:242px;width:22px;height:137px;background:#e8e8e8"></div>
<div style="left:1255px;top:265px;width:2px;height:19px;background:#555"></div>
<div style="left:613px;top:281px;width:632px;height:1px;background:#4c4c4c"></div>
<div style="left:613px;top:301px;width:632px;height:1px;background:#4c4c4c"></div>
<div style="left:613px;top:321px;width:632px;height:1px;background:#4c4c4c"></div>
<div style="left:613px;top:341px;width:632px;height:1px;background:#4c4c4c"></div>
<div style="left:613px;top:361px;width:632px;height:1px;background:#4c4c4c"></div>
<div style="left:645px;top:262px;width:1px;height:117px;background:#4c4c4c"></div>
<div style="left:735px;top:262px;width:1px;height:117px;background:#4c4c4c"></div>
<div style="left:802px;top:262px;width:1px;height:117px;background:#4c4c4c"></div>
<div style="left:1115px;top:262px;width:1px;height:117px;background:#4c4c4c"></div>
<div style="left:1162px;top:262px;width:1px;height:117px;background:#4c4c4c"></div>
<div style="left:1244px;top:262px;width:1px;height:117px;background:#4c4c4c"></div>
<span style='left:617px;top:266px;font:13px/1 "Liberation Sans",sans-serif;color:#111;letter-spacing:0.750px;-webkit-text-stroke:0.2px #111;'>004</span>
<span style='left:650px;top:266px;font:13px/1 "Liberation Sans",sans-serif;color:#111;letter-spacing:0.656px;-webkit-text-stroke:0.2px #111;'>01/09/2025</span>
<span style='left:753.36px;top:266px;font:13px/1 "Liberation Sans",sans-serif;color:#111;letter-spacing:0.750px;-webkit-text-stroke:0.2px #111;'>017550</span>
<span style='left:807px;top:266px;font:13px/1 "Liberation Sans",sans-serif;color:#111;letter-spacing:0.349px;-webkit-text-stroke:0.2px #111;'>DIPIRONA SODICA 500 MG GTS C/10 ML</span>
<span style='left:1133.29px;top:266px;font:13px/1 "Liberation Sans",sans-serif;color:#111;letter-spacing:0.633px;-webkit-text-stroke:0.2px #111;'>4,00</span>
<span style='left:1207.33px;top:266px;font:13px/1 "Liberation Sans",sans-serif;color:#111;letter-spacing:0.656px;-webkit-text-stroke:0.2px #111;'>14,32</span>
<span style='left:617px;top:286px;font:13px/1 "Liberation Sans",sans-serif;color:#111;letter-spacing:0.750px;-webkit-text-stroke:0.2px #111;'>004</span>
<span style='left:650px;top:286px;font:13px/1 "Liberation Sans",sans-serif;color:#111;letter-spacing:0.656px;-webkit-text-stroke:0.2px #111;'>01/09/2025</span>
<span style='left:753.36px;top:286px;font:13px/1 "Liberation Sans",sans-serif;color:#111;letter-spacing:0.750px;-webkit-text-stroke:0.2px #111;'>017551</span>
<span style='left:807px;top:286px;font:13px/1 "Liberation Sans",sans-serif;color:#111;letter-spacing:0.349px;-webkit-text-stroke:0.2px #111;'>DIPIRONA SODICA 500 MG GTS C/20 ML</span>
<span style='left:1133.29px;top:286px;font:13px/1 "Liberation Sans",sans-serif;color:#111;letter-spacing:0.633px;-webkit-text-stroke:0.2px #111;'>2,00</span>
<span style='left:1207.33px;top:286px;font:13px/1 "Liberation Sans",sans-serif;color:#111;letter-spacing:0.656px;-webkit-text-stroke:0.2px #111;'>15,66</span>
<span style='left:617px;top:306px;font:13px/1 "Liberation Sans",sans-serif;color:#111;letter-spacing:0.750px;-webkit-text-stroke:0.2px #111;'>004</span>
<span style='left:650px;top:306px;font:13px/1 "Liberation Sans",sans-serif;color:#111;letter-spacing:0.656px;-webkit-text-stroke:0.2px #111;'>01/09/2025</span>
<span style='left:753.36px;top:306px;font:13px/1 "Liberation Sans",sans-serif;color:#111;letter-spacing:0.750px;-webkit-text-stroke:0.2px #111;'>028905</span>
<span style='left:807px;top:306px;font:13px/1 "Liberation Sans",sans-serif;color:#111;letter-spacing:0.349px;-webkit-text-stroke:0.2px #111;'>DIPIRONA SODICA 50 MG SOL C/100 ML</span>
<span style='left:1133.29px;top:306px;font:13px/1 "Liberation Sans",sans-serif;color:#111;letter-spacing:0.633px;-webkit-text-stroke:0.2px #111;'>1,00</span>
<span style='left:1207.33px;top:306px;font:13px/1 "Liberation Sans",sans-serif;color:#111;letter-spacing:0.656px;-webkit-text-stroke:0.2px #111;'>14,45</span>
<span style='left:617px;top:326px;font:13px/1 "Liberation Sans",sans-serif;color:#111;letter-spacing:0.750px;-webkit-text-stroke:0.2px #111;'>004</span>
<span style='left:650px;top:326px;font:13px/1 "Liberation Sans",sans-serif;color:#111;letter-spacing:0.656px;-webkit-text-stroke:0.2px #111;'>01/09/2025</span>
<span style='left:753.36px;top:326px;font:13px/1 "Liberation Sans",sans-serif;color:#111;letter-spacing:0.750px;-webkit-text-stroke:0.2px #111;'>030892</span>
<span style='left:807px;top:326px;font:13px/1 "Liberation Sans",sans-serif;color:#111;letter-spacing:0.356px;-webkit-text-stroke:0.2px #111;'>DIPIRONA SODICA 500 MG C/30 CPR</span>
<span style='left:1133.29px;top:326px;font:13px/1 "Liberation Sans",sans-serif;color:#111;letter-spacing:0.633px;-webkit-text-stroke:0.2px #111;'>1,00</span>
<span style='left:1207.33px;top:326px;font:13px/1 "Liberation Sans",sans-serif;color:#111;letter-spacing:0.656px;-webkit-text-stroke:0.2px #111;'>17,46</span>
<div style="left:-20px;top:388px;width:1954px;height:3.5px;background:#1c3f9c"></div>
<span style='left:9px;top:402.2px;font:13px/1 "Liberation Sans",sans-serif;color:#111;letter-spacing:0.208px;-webkit-text-stroke:.35px #111;'>Produto</span>
<div style="left:9px;top:421px;width:142px;height:26px;background:#fff;border:1px solid #6b6b6b;box-shadow:inset 1px 1px 0 #9a9a9a,0 0 0 .5px #999"></div>
<div style="left:156.5px;top:420px;width:31px;height:26px;background:linear-gradient(#fafafa,#e9e9e9);border:2px solid #3a6ca4;border-radius:4.5px"></div>
<span style='left:164.8px;top:427.7px;font:bold 13.5px/1 "DejaVu Sans","Liberation Sans",sans-serif;color:#2a18b8;-webkit-text-stroke:.5px #2a18b8;'>...</span>
<span style='left:194px;top:402.2px;font:13px/1 "Liberation Sans",sans-serif;color:#111;letter-spacing:0.099px;-webkit-text-stroke:.35px #111;'>Descrição do Produto</span>
<div style="left:195px;top:421px;width:566px;height:26px;background:#fff;border:1px solid #6b6b6b;box-shadow:inset 1px 1px 0 #9a9a9a,0 0 0 .5px #999"></div>
<div style="left:766px;top:421px;width:178px;height:26px;background:#fff;border:1px solid #6b6b6b;box-shadow:inset 1px 1px 0 #9a9a9a,0 0 0 .5px #999"></div>
<span style='left:946px;top:401.7px;font:13px/1 "Liberation Sans",sans-serif;color:#111;letter-spacing:0.062px;-webkit-text-stroke:.35px #111;'>Curva</span>
<div style="left:947px;top:421px;width:49px;height:26px;background:#fff;border:1px solid #6b6b6b;box-shadow:inset 1px 1px 0 #9a9a9a,0 0 0 .5px #999"></div>
<div style="left:1002px;top:420px;width:31px;height:26px;background:linear-gradient(#fafafa,#e9e9e9);border:2px solid #3a6ca4;border-radius:4.5px"></div>
<span style='left:1010.3px;top:427.7px;font:bold 13.5px/1 "DejaVu Sans","Liberation Sans",sans-serif;color:#2a18b8;-webkit-text-stroke:.5px #2a18b8;'>...</span>
<span style='left:1041px;top:401.2px;font:13px/1 "Liberation Sans",sans-serif;color:#111;letter-spacing:0.011px;-webkit-text-stroke:.35px #111;'>CRM/CRO/CRV - Nome do profissional</span>
<div style="left:1042px;top:421px;width:271px;height:26px;background:#fff;border:1px solid #6b6b6b;box-shadow:inset 1px 1px 0 #9a9a9a,0 0 0 .5px #999"></div>
<div style="left:1318px;top:420px;width:32px;height:27px;background:linear-gradient(#fafafa,#e9e9e9);border:2px solid #4f7898;border-radius:4.5px"></div>
<span style='left:1326.8px;top:428.7px;font:bold 13.5px/1 "DejaVu Sans","Liberation Sans",sans-serif;color:#2a18b8;-webkit-text-stroke:.5px #2a18b8;'>...</span>
<div style="left:1355px;top:419px;width:93px;height:31px;background:linear-gradient(#fafafa,#e6e6e6);border:2px solid #4f7898;border-radius:4.5px;box-sizing:border-box"></div>
<span style='left:1373px;top:427px;font:bold 16px/1 "Liberation Sans",sans-serif;color:#1a1ab0;letter-spacing:0.019px;'>SNGPC</span>
<span style='left:9px;top:455.2px;font:13px/1 "Liberation Sans",sans-serif;color:#111;letter-spacing:0.177px;-webkit-text-stroke:.35px #111;'>Quantidade</span>
<div style="left:9px;top:471px;width:95px;height:26px;background:#fff;border:1px solid #6b6b6b;box-shadow:inset 1px 1px 0 #9a9a9a,0 0 0 .5px #999"></div>
<span style='left:56.6px;top:477px;font:bold 15px/1 "DejaVu Serif","Liberation Serif",serif;color:#160cd8;letter-spacing:-0.397px;-webkit-text-stroke:.25px #160cd8;'>1,000</span>
<span style='left:116px;top:455.2px;font:13px/1 "Liberation Sans",sans-serif;color:#111;letter-spacing:0.195px;-webkit-text-stroke:.35px #111;'>Preço Tabela</span>
<div style="left:117px;top:471px;width:120px;height:26px;background:#fff;border:1px solid #6b6b6b;box-shadow:inset 1px 1px 0 #9a9a9a,0 0 0 .5px #999"></div>
<span style='left:198.86px;top:477px;font:bold 15px/1 "DejaVu Serif","Liberation Serif",serif;color:#160cd8;letter-spacing:-0.137px;-webkit-text-stroke:.25px #160cd8;'>0,00</span>
<span style='left:251px;top:455.2px;font:13px/1 "Liberation Sans",sans-serif;color:#111;letter-spacing:0.358px;-webkit-text-stroke:.35px #111;'>Preço Oferta</span>
<div style="left:252px;top:471px;width:117px;height:26px;background:#fff;border:1px solid #6b6b6b;box-shadow:inset 1px 1px 0 #9a9a9a,0 0 0 .5px #999"></div>
<span style='left:330.86px;top:477px;font:bold 15px/1 "DejaVu Serif","Liberation Serif",serif;color:#160cd8;letter-spacing:-0.137px;-webkit-text-stroke:.25px #160cd8;'>0,00</span>
<span style='left:382px;top:455.2px;font:13px/1 "Liberation Sans",sans-serif;color:#111;letter-spacing:0.280px;-webkit-text-stroke:.35px #111;'>%Desconto</span>
<div style="left:382px;top:471px;width:118px;height:26px;background:#fff;border:1px solid #6b6b6b;box-shadow:inset 1px 1px 0 #9a9a9a,0 0 0 .5px #999"></div>
<span style='left:440.76px;top:477px;font:bold 15px/1 "DejaVu Serif","Liberation Serif",serif;color:#160cd8;letter-spacing:-0.237px;-webkit-text-stroke:.25px #160cd8;'>0,0000</span>
<span style='left:508px;top:455.2px;font:13px/1 "Liberation Sans",sans-serif;color:#111;letter-spacing:0.220px;-webkit-text-stroke:.35px #111;'>Valor Desconto</span>
<div style="left:512px;top:471px;width:125px;height:26px;background:#fff;border:1px solid #6b6b6b;box-shadow:inset 1px 1px 0 #9a9a9a,0 0 0 .5px #999"></div>
<span style='left:597.86px;top:477px;font:bold 15px/1 "DejaVu Serif","Liberation Serif",serif;color:#160cd8;letter-spacing:-0.137px;-webkit-text-stroke:.25px #160cd8;'>0,00</span>
<span style='left:646px;top:455.2px;font:13px/1 "Liberation Sans",sans-serif;color:#111;letter-spacing:0.342px;-webkit-text-stroke:.35px #111;'>Valor Total</span>
<div style="left:649px;top:471px;width:114px;height:26px;background:#fff;border:1px solid #6b6b6b;box-shadow:inset 1px 1px 0 #9a9a9a,0 0 0 .5px #999"></div>
<span style='left:723.36px;top:477px;font:bold 15px/1 "DejaVu Serif","Liberation Serif",serif;color:#ff0000;letter-spacing:-0.137px;-webkit-text-stroke:.25px #ff0000;'>0,00</span>
<div style="left:9.6px;top:526px;width:1697.5px;height:261px;background:#fff;border:1.2px solid #484848;box-sizing:border-box"></div>
<div style="left:1686px;top:527px;width:20px;height:259px;background:#e6e6e6"></div>
<div style="left:1696px;top:551px;width:2px;height:19px;background:#555"></div>
<div style="left:10px;top:622.05px;width:1676px;height:23.75px;background:#00ffff"></div>
<div style="left:11px;top:527px;width:125.5px;height:24px;background:#f0f0f0;border-right:1.5px solid #333;border-bottom:2px solid #333;border-left:1px solid #fff;box-sizing:border-box"></div>
<span style='left:16px;top:532px;font:bold 16px/1 "DejaVu Sans","Liberation Sans",sans-serif;color:#111;'>Vend.</span>
<div style="left:136.5px;top:527px;width:135px;height:24px;background:#f0f0f0;border-right:1.5px solid #333;border-bottom:2px solid #333;border-left:1px solid #fff;box-sizing:border-box"></div>
<span style='left:206.38px;top:532px;font:bold 16px/1 "DejaVu Sans","Liberation Sans",sans-serif;color:#111;'>Código</span>
<div style="left:271.5px;top:527px;width:342.5px;height:24px;background:#f0f0f0;border-right:1.5px solid #333;border-bottom:2px solid #333;border-left:1px solid #fff;box-sizing:border-box"></div>
<span style='left:276.5px;top:532px;font:bold 16px/1 "DejaVu Sans","Liberation Sans",sans-serif;color:#111;'>Descrição Produto</span>
<div style="left:614px;top:527px;width:190px;height:24px;background:#f0f0f0;border-right:1.5px solid #333;border-bottom:2px solid #333;border-left:1px solid #fff;box-sizing:border-box"></div>
<span style='left:619px;top:532px;font:bold 16px/1 "DejaVu Sans","Liberation Sans",sans-serif;color:#111;'>Fabricante</span>
<div style="left:804px;top:527px;width:120.5px;height:24px;background:#f0f0f0;border-right:1.5px solid #333;border-bottom:2px solid #333;border-left:1px solid #fff;box-sizing:border-box"></div>
<span style='left:871.86px;top:532px;font:bold 16px/1 "DejaVu Sans","Liberation Sans",sans-serif;color:#111;'>Qtde.</span>
<div style="left:924.5px;top:527px;width:161.5px;height:24px;background:#f0f0f0;border-right:1.5px solid #333;border-bottom:2px solid #333;border-left:1px solid #fff;box-sizing:border-box"></div>
<span style='left:989.3px;top:532px;font:bold 16px/1 "DejaVu Sans","Liberation Sans",sans-serif;color:#111;'>Preço Tab.</span>
<div style="left:1086px;top:527px;width:142.5px;height:24px;background:#f0f0f0;border-right:1.5px solid #333;border-bottom:2px solid #333;border-left:1px solid #fff;box-sizing:border-box"></div>
<span style='left:1154.67px;top:532px;font:bold 16px/1 "DejaVu Sans","Liberation Sans",sans-serif;color:#111;'>% Desc.</span>
<div style="left:1228.5px;top:527px;width:140px;height:24px;background:#f0f0f0;border-right:1.5px solid #333;border-bottom:2px solid #333;border-left:1px solid #fff;box-sizing:border-box"></div>
<span style='left:1316.28px;top:532px;font:bold 16px/1 "DejaVu Sans","Liberation Sans",sans-serif;color:#111;'>Desc.</span>
<div style="left:1368.5px;top:527px;width:187px;height:24px;background:#f0f0f0;border-right:1.5px solid #333;border-bottom:2px solid #333;border-left:1px solid #fff;box-sizing:border-box"></div>
<span style='left:1479.39px;top:532px;font:bold 16px/1 "DejaVu Sans","Liberation Sans",sans-serif;color:#111;'>Vl. Unit.</span>
<div style="left:1555.5px;top:527px;width:126px;height:24px;background:#f0f0f0;border-right:1.5px solid #333;border-bottom:2px solid #333;border-left:1px solid #fff;box-sizing:border-box"></div>
<span style='left:1604.77px;top:532px;font:bold 16px/1 "DejaVu Sans","Liberation Sans",sans-serif;color:#111;'>Vl. Total</span>
<div style="left:10px;top:574px;width:1676px;height:1px;background:#4c4c4c"></div>
<div style="left:10px;top:598px;width:1676px;height:1px;background:#4c4c4c"></div>
<div style="left:10px;top:621px;width:1676px;height:1px;background:#4c4c4c"></div>
<div style="left:10px;top:645px;width:1676px;height:1px;background:#4c4c4c"></div>
<div style="left:10px;top:669px;width:1676px;height:1px;background:#4c4c4c"></div>
<div style="left:10px;top:693px;width:1676px;height:1px;background:#4c4c4c"></div>
<div style="left:10px;top:716px;width:1676px;height:1px;background:#4c4c4c"></div>
<div style="left:10px;top:740px;width:1676px;height:1px;background:#4c4c4c"></div>
<div style="left:10px;top:764px;width:1676px;height:1px;background:#4c4c4c"></div>
<div style="left:136px;top:550.8px;width:1px;height:235px;background:#4c4c4c"></div>
<div style="left:271px;top:550.8px;width:1px;height:235px;background:#4c4c4c"></div>
<div style="left:614px;top:550.8px;width:1px;height:235px;background:#4c4c4c"></div>
<div style="left:804px;top:550.8px;width:1px;height:235px;background:#4c4c4c"></div>
<div style="left:924px;top:550.8px;width:1px;height:235px;background:#4c4c4c"></div>
<div style="left:1086px;top:550.8px;width:1px;height:235px;background:#4c4c4c"></div>
<div style="left:1228px;top:550.8px;width:1px;height:235px;background:#4c4c4c"></div>
<div style="left:1368px;top:550.8px;width:1px;height:235px;background:#4c4c4c"></div>
<div style="left:1555px;top:550.8px;width:1px;height:235px;background:#4c4c4c"></div>
<div style="left:1681px;top:550.8px;width:1px;height:235px;background:#4c4c4c"></div>
<span style='left:15px;top:555.8px;font:15.7px/1 "DejaVu Sans","Liberation Sans",sans-serif;color:#ff0000;letter-spacing:0.050px;max-width:120.5px;overflow:hidden;white-space:pre;'>1013</span>
<span style='left:208.36px;top:555.8px;font:15.7px/1 "DejaVu Sans","Liberation Sans",sans-serif;color:#ff0000;letter-spacing:0.050px;'>079769</span>
<span style='left:275.5px;top:555.8px;font:15.7px/1 "DejaVu Sans","Liberation Sans",sans-serif;color:#ff0000;letter-spacing:0.460px;max-width:337.5px;overflow:hidden;white-space:pre;'>BARRA PROTEICA TOPWAY 45G BANOFFE</span>
<span style='left:618px;top:555.8px;font:15.7px/1 "DejaVu Sans","Liberation Sans",sans-serif;color:#ff0000;letter-spacing:0.460px;max-width:185px;overflow:hidden;white-space:pre;'>TOPWAY</span>
<span style='left:876.38px;top:555.8px;font:15.7px/1 "DejaVu Sans","Liberation Sans",sans-serif;color:#ff0000;letter-spacing:0.050px;'>2,000</span>
<span style='left:1047.91px;top:555.8px;font:15.7px/1 "DejaVu Sans","Liberation Sans",sans-serif;color:#ff0000;letter-spacing:0.050px;'>7,49</span>
<span style='left:1170.34px;top:555.8px;font:15.7px/1 "DejaVu Sans","Liberation Sans",sans-serif;color:#ff0000;letter-spacing:0.050px;'>0,0000</span>
<span style='left:1330.41px;top:555.8px;font:15.7px/1 "DejaVu Sans","Liberation Sans",sans-serif;color:#ff0000;letter-spacing:0.050px;'>0,00</span>
<span style='left:1517.41px;top:555.8px;font:15.7px/1 "DejaVu Sans","Liberation Sans",sans-serif;color:#ff0000;letter-spacing:0.050px;'>7,49</span>
<span style='left:1631.88px;top:555.8px;font:15.7px/1 "DejaVu Sans","Liberation Sans",sans-serif;color:#ff0000;letter-spacing:0.050px;'>14,98</span>
<span style='left:15px;top:579.55px;font:15.7px/1 "DejaVu Sans","Liberation Sans",sans-serif;color:#ff0000;letter-spacing:0.050px;max-width:120.5px;overflow:hidden;white-space:pre;'>1013</span>
<span style='left:208.36px;top:579.55px;font:15.7px/1 "DejaVu Sans","Liberation Sans",sans-serif;color:#ff0000;letter-spacing:0.050px;'>071105</span>
<span style='left:275.5px;top:579.55px;font:15.7px/1 "DejaVu Sans","Liberation Sans",sans-serif;color:#ff0000;letter-spacing:0.460px;max-width:337.5px;overflow:hidden;white-space:pre;'>BARRA PROTEICA BOLD THIN COOKIES C</span>
<span style='left:618px;top:579.55px;font:15.7px/1 "DejaVu Sans","Liberation Sans",sans-serif;color:#ff0000;letter-spacing:0.460px;max-width:185px;overflow:hidden;white-space:pre;'>BARRIND INDUSTRIA</span>
<span style='left:876.38px;top:579.55px;font:15.7px/1 "DejaVu Sans","Liberation Sans",sans-serif;color:#ff0000;letter-spacing:0.050px;'>3,000</span>
<span style='left:1047.91px;top:579.55px;font:15.7px/1 "DejaVu Sans","Liberation Sans",sans-serif;color:#ff0000;letter-spacing:0.050px;'>8,95</span>
<span style='left:1170.34px;top:579.55px;font:15.7px/1 "DejaVu Sans","Liberation Sans",sans-serif;color:#ff0000;letter-spacing:0.050px;'>0,0000</span>
<span style='left:1330.41px;top:579.55px;font:15.7px/1 "DejaVu Sans","Liberation Sans",sans-serif;color:#ff0000;letter-spacing:0.050px;'>0,00</span>
<span style='left:1517.41px;top:579.55px;font:15.7px/1 "DejaVu Sans","Liberation Sans",sans-serif;color:#ff0000;letter-spacing:0.050px;'>8,95</span>
<span style='left:1631.88px;top:579.55px;font:15.7px/1 "DejaVu Sans","Liberation Sans",sans-serif;color:#ff0000;letter-spacing:0.050px;'>26,85</span>
<span style='left:15px;top:603.3px;font:15.7px/1 "DejaVu Sans","Liberation Sans",sans-serif;color:#ff0000;letter-spacing:0.050px;max-width:120.5px;overflow:hidden;white-space:pre;'>1013</span>
<span style='left:208.36px;top:603.3px;font:15.7px/1 "DejaVu Sans","Liberation Sans",sans-serif;color:#ff0000;letter-spacing:0.050px;'>057642</span>
<span style='left:275.5px;top:603.3px;font:15.7px/1 "DejaVu Sans","Liberation Sans",sans-serif;color:#ff0000;letter-spacing:0.460px;max-width:337.5px;overflow:hidden;white-space:pre;'>TAXA DE ENTREGA</span>
<span style='left:618px;top:603.3px;font:15.7px/1 "DejaVu Sans","Liberation Sans",sans-serif;color:#ff0000;letter-spacing:0.460px;max-width:185px;overflow:hidden;white-space:pre;'>IMOBILIZADO CONSUMO</span>
<span style='left:876.38px;top:603.3px;font:15.7px/1 "DejaVu Sans","Liberation Sans",sans-serif;color:#ff0000;letter-spacing:0.050px;'>1,000</span>
<span style='left:1047.91px;top:603.3px;font:15.7px/1 "DejaVu Sans","Liberation Sans",sans-serif;color:#ff0000;letter-spacing:0.050px;'>5,99</span>
<span style='left:1170.34px;top:603.3px;font:15.7px/1 "DejaVu Sans","Liberation Sans",sans-serif;color:#ff0000;letter-spacing:0.050px;'>0,0000</span>
<span style='left:1330.41px;top:603.3px;font:15.7px/1 "DejaVu Sans","Liberation Sans",sans-serif;color:#ff0000;letter-spacing:0.050px;'>0,00</span>
<span style='left:1517.41px;top:603.3px;font:15.7px/1 "DejaVu Sans","Liberation Sans",sans-serif;color:#ff0000;letter-spacing:0.050px;'>5,99</span>
<span style='left:1641.91px;top:603.3px;font:15.7px/1 "DejaVu Sans","Liberation Sans",sans-serif;color:#ff0000;letter-spacing:0.050px;'>5,99</span>
<span style='left:15px;top:627.05px;font:15.7px/1 "DejaVu Sans","Liberation Sans",sans-serif;color:#a00000;letter-spacing:0.050px;max-width:120.5px;overflow:hidden;white-space:pre;'>1013</span>
<span style='left:208.36px;top:627.05px;font:15.7px/1 "DejaVu Sans","Liberation Sans",sans-serif;color:#a00000;letter-spacing:0.050px;'>043401</span>
<span style='left:275.5px;top:627.05px;font:15.7px/1 "DejaVu Sans","Liberation Sans",sans-serif;color:#a00000;letter-spacing:0.460px;max-width:337.5px;overflow:hidden;white-space:pre;'>ALLESTRA 75/20MCG C/63 CPR</span>
<span style='left:618px;top:627.05px;font:15.7px/1 "DejaVu Sans","Liberation Sans",sans-serif;color:#a00000;letter-spacing:0.460px;max-width:185px;overflow:hidden;white-space:pre;'>ACHE FARMA</span>
<span style='left:876.38px;top:627.05px;font:15.7px/1 "DejaVu Sans","Liberation Sans",sans-serif;color:#a00000;letter-spacing:0.050px;'>1,000</span>
<span style='left:1037.88px;top:627.05px;font:15.7px/1 "DejaVu Sans","Liberation Sans",sans-serif;color:#a00000;letter-spacing:0.050px;'>94,02</span>
<span style='left:1170.34px;top:627.05px;font:15.7px/1 "DejaVu Sans","Liberation Sans",sans-serif;color:#a00000;letter-spacing:0.050px;'>0,0000</span>
<span style='left:1330.41px;top:627.05px;font:15.7px/1 "DejaVu Sans","Liberation Sans",sans-serif;color:#a00000;letter-spacing:0.050px;'>0,00</span>
<span style='left:1507.38px;top:627.05px;font:15.7px/1 "DejaVu Sans","Liberation Sans",sans-serif;color:#a00000;letter-spacing:0.050px;'>94,02</span>
<span style='left:1631.88px;top:627.05px;font:15.7px/1 "DejaVu Sans","Liberation Sans",sans-serif;color:#a00000;letter-spacing:0.050px;'>94,02</span>
<div style="left:1714px;top:527px;width:225px;height:121px;background:#fff;border:1px solid #666;box-sizing:border-box"></div>
<div style="left:1715px;top:528px;width:224px;height:19.6px;background:#0066d8"></div>
<span style='left:1774.52px;top:530.6px;font:13px/1 "Liberation Sans",sans-serif;color:#c4dcf4;letter-spacing:0.250px;'>Estoque filiais</span>
<div style="left:1715px;top:547.6px;width:41px;height:20px;background:#f0f0f0;border-right:1.5px solid #444;border-bottom:2px solid #444;border-left:1px solid #fff;box-sizing:border-box"></div>
<span style='left:1723px;top:551.6px;font:13px/1 "Liberation Sans",sans-serif;color:#0c0cc8;letter-spacing:0.280px;-webkit-text-stroke:0.15px #0c0cc8;'>Filial</span>
<div style="left:1756px;top:547.6px;width:74.5px;height:20px;background:#f0f0f0;border-right:1.5px solid #444;border-bottom:2px solid #444;border-left:1px solid #fff;box-sizing:border-box"></div>
<span style='left:1778.62px;top:551.6px;font:13px/1 "Liberation Sans",sans-serif;color:#0c0cc8;letter-spacing:0.280px;-webkit-text-stroke:0.15px #0c0cc8;'>Estoque</span>
<div style="left:1830.5px;top:547.6px;width:66.5px;height:20px;background:#f0f0f0;border-right:1.5px solid #444;border-bottom:2px solid #444;border-left:1px solid #fff;box-sizing:border-box"></div>
<span style='left:1838.78px;top:551.6px;font:13px/1 "Liberation Sans",sans-serif;color:#0c0cc8;letter-spacing:0.280px;-webkit-text-stroke:0.15px #0c0cc8;'>Pen. Ent.</span>
<div style="left:1897px;top:547.6px;width:40px;height:99.4px;background:#e8e8e8"></div>
<div style="left:1909px;top:570.6px;width:2px;height:19px;background:#555"></div>
<div style="left:1715px;top:586.6px;width:182px;height:1px;background:#4c4c4c"></div>
<div style="left:1715px;top:606.6px;width:182px;height:1px;background:#4c4c4c"></div>
<div style="left:1715px;top:626.6px;width:182px;height:1px;background:#4c4c4c"></div>
<div style="left:1715px;top:646.6px;width:182px;height:1px;background:#4c4c4c"></div>
<div style="left:1755px;top:567.6px;width:1px;height:79.4px;background:#4c4c4c"></div>
<div style="left:1829.5px;top:567.6px;width:1px;height:79.4px;background:#4c4c4c"></div>
<div style="left:1896px;top:567.6px;width:1px;height:79.4px;background:#4c4c4c"></div>
<div style="left:1714px;top:667px;width:225px;height:120px;background:#fff;border:1px solid #666;box-sizing:border-box"></div>
<div style="left:1715px;top:668px;width:224px;height:19.6px;background:#0066d8"></div>
<span style='left:1775.38px;top:670.6px;font:13px/1 "Liberation Sans",sans-serif;color:#c4dcf4;letter-spacing:0.250px;'>Transferência</span>
<div style="left:1715px;top:687.6px;width:41px;height:20px;background:#f0f0f0;border-right:1.5px solid #444;border-bottom:2px solid #444;border-left:1px solid #fff;box-sizing:border-box"></div>
<span style='left:1723px;top:691.6px;font:13px/1 "Liberation Sans",sans-serif;color:#0c0cc8;letter-spacing:0.280px;-webkit-text-stroke:0.15px #0c0cc8;'>Filial</span>
<div style="left:1756px;top:687.6px;width:141px;height:20px;background:#f0f0f0;border-right:1.5px solid #444;border-bottom:2px solid #444;border-left:1px solid #fff;box-sizing:border-box"></div>
<span style='left:1760px;top:691.6px;font:13px/1 "Liberation Sans",sans-serif;color:#0c0cc8;letter-spacing:0.280px;-webkit-text-stroke:0.15px #0c0cc8;'>Tipo produto</span>
<div style="left:1897px;top:687.6px;width:40px;height:98.4px;background:#e8e8e8"></div>
<div style="left:1909px;top:710.6px;width:2px;height:19px;background:#555"></div>
<div style="left:1715px;top:726.6px;width:182px;height:1px;background:#4c4c4c"></div>
<div style="left:1715px;top:746.6px;width:182px;height:1px;background:#4c4c4c"></div>
<div style="left:1715px;top:766.6px;width:182px;height:1px;background:#4c4c4c"></div>
<div style="left:1755px;top:707.6px;width:1px;height:78.4px;background:#4c4c4c"></div>
<div style="left:1896px;top:707.6px;width:1px;height:78.4px;background:#4c4c4c"></div>
<span style='left:9px;top:797px;font:bold 12.5px/1 "DejaVu Sans","Liberation Sans",sans-serif;color:#d80000;letter-spacing:0.035px;-webkit-text-stroke:.3px #d80000;'>Itens em vermelho não podem ser recebidos em convênio.</span>
<span style='left:8.5px;top:816.2px;font:13px/1 "Liberation Sans",sans-serif;color:#111;letter-spacing:0.128px;-webkit-text-stroke:.35px #111;'>Observações</span>
<div style="left:9px;top:833px;width:420px;height:66px;background:#fff;border:1px solid #6b6b6b;box-shadow:inset 1px 1px 0 #9a9a9a,0 0 0 .5px #999"></div>
<div style="left:435px;top:841px;width:10px;height:10px"><svg width="10" height="10"><path d="M0 8L5 1L10 8Z" fill="#777"/></svg></div>
<div style="left:435px;top:884px;width:10px;height:10px"><svg width="10" height="10"><path d="M0 2L5 9L10 2Z" fill="#777"/></svg></div>
<span style='left:440px;top:812px;font:bold 12.5px/1 "DejaVu Sans","Liberation Sans",sans-serif;color:#18b0b0;letter-spacing:-0.037px;-webkit-text-stroke:.3px #18b0b0;'>Itens em azul são referentes a produtos de uso contínuo.</span>
<span style='left:466px;top:827px;font:bold 18.2px/1 "DejaVu Sans","Liberation Sans",sans-serif;color:#ff0000;letter-spacing:-0.033px;-webkit-text-stroke:.4px #ff0000;'>Entrega ativada.</span>
<span style='left:466px;top:852px;font:bold 18.2px/1 "DejaVu Sans","Liberation Sans",sans-serif;color:#111;letter-spacing:0.246px;-webkit-text-stroke:.4px #111;'>Troco para:</span>
<div style="left:642px;top:846px;width:115px;height:28px;background:#fff;border:1px solid #6b6b6b;box-shadow:inset 1px 1px 0 #9a9a9a,0 0 0 .5px #999"></div>
<span style='left:707.26px;top:850px;font:bold 19.3px/1 "DejaVu Serif","Liberation Serif",serif;color:#0000ff;letter-spacing:0.258px;-webkit-text-stroke:.25px #0000ff;'>0,00</span>
<span style='left:466px;top:887px;font:bold 18.2px/1 "DejaVu Sans","Liberation Sans",sans-serif;color:#111;letter-spacing:-0.083px;-webkit-text-stroke:.4px #111;'>Filial de entrega:</span>
<div style="left:642px;top:880px;width:116px;height:30px;background:#fff;border:1px solid #6b6b6b;box-shadow:inset 1px 1px 0 #9a9a9a,0 0 0 .5px #999"></div>
<div style="left:735px;top:882px;width:21px;height:27px;background:#e6e6e6;border-right:2px solid #555;border-bottom:2px solid #555;border-top:1px solid #fff;border-left:1px solid #fff"></div>
<div style="left:740px;top:892px;width:10px;height:6px"><svg width="10" height="6" style="display:block"><path d="M0 0H10L5 6Z" fill="#000"/></svg></div>
<span style='left:650px;top:887px;font:17px/1 "DejaVu Sans","Liberation Sans",sans-serif;color:#3030c0;'>9</span>
<span style='left:1568px;top:800.7px;font:13px/1 "Liberation Sans",sans-serif;color:#111;letter-spacing:0.278px;-webkit-text-stroke:.35px #111;'>Total Produtos</span>
<div style="left:1569px;top:819px;width:112px;height:32px;background:#fff;border:1px solid #6b6b6b;box-shadow:inset 1px 1px 0 #9a9a9a,0 0 0 .5px #999"></div>
<span style='left:1605.87px;top:823px;font:bold 19.3px/1 "DejaVu Serif","Liberation Serif",serif;color:#0000ff;letter-spacing:-0.133px;-webkit-text-stroke:.25px #0000ff;'>141,84</span>
<span style='left:1686px;top:800.7px;font:13px/1 "Liberation Sans",sans-serif;color:#111;letter-spacing:0.233px;-webkit-text-stroke:.35px #111;'>Total Descontos</span>
<div style="left:1689px;top:819px;width:112px;height:32px;background:#fff;border:1px solid #6b6b6b;box-shadow:inset 1px 1px 0 #9a9a9a,0 0 0 .5px #999"></div>
<span style='left:1752.01px;top:823px;font:bold 19.3px/1 "DejaVu Serif","Liberation Serif",serif;color:#ff0000;letter-spacing:0.008px;-webkit-text-stroke:.25px #ff0000;'>0,00</span>
<span style='left:1803px;top:800.7px;font:13px/1 "Liberation Sans",sans-serif;color:#111;letter-spacing:0.284px;-webkit-text-stroke:.35px #111;'>Total Geral</span>
<div style="left:1807px;top:819px;width:111px;height:32px;background:#fff;border:1px solid #6b6b6b;box-shadow:inset 1px 1px 0 #9a9a9a,0 0 0 .5px #999"></div>
<span style='left:1842.87px;top:823px;font:bold 19.3px/1 "DejaVu Serif","Liberation Serif",serif;color:#0000ff;letter-spacing:-0.133px;-webkit-text-stroke:.25px #0000ff;'>141,84</span>
<span style='left:1456px;top:858.7px;font:13px/1 "Liberation Sans",sans-serif;color:#111;letter-spacing:0.177px;-webkit-text-stroke:.35px #111;'>Quantidade</span>
<div style="left:1457px;top:876px;width:104px;height:32px;background:#fff;border:1px solid #6b6b6b;box-shadow:inset 1px 1px 0 #9a9a9a,0 0 0 .5px #999"></div>
<span style='left:1498.92px;top:880px;font:bold 19.3px/1 "DejaVu Serif","Liberation Serif",serif;color:#0000ff;letter-spacing:-0.078px;-webkit-text-stroke:.25px #0000ff;'>7,000</span>
<span style='left:1568px;top:858.7px;font:13px/1 "Liberation Sans",sans-serif;color:#111;letter-spacing:0.015px;-webkit-text-stroke:.35px #111;'>Saldo Convênio</span>
<div style="left:1569px;top:876px;width:112px;height:32px;background:#fff;border:1px solid #6b6b6b;box-shadow:inset 1px 1px 0 #9a9a9a,0 0 0 .5px #999"></div>
<span style='left:1632.01px;top:880px;font:bold 19.3px/1 "DejaVu Serif","Liberation Serif",serif;color:#0000ff;letter-spacing:0.008px;-webkit-text-stroke:.25px #0000ff;'>0,00</span>
<span style='left:1686px;top:860.7px;font:13px/1 "Liberation Sans",sans-serif;color:#111;letter-spacing:0.286px;-webkit-text-stroke:.35px #111;'>Total Convênio</span>
<div style="left:1689px;top:876px;width:112px;height:32px;background:#fff;border:1px solid #6b6b6b;box-shadow:inset 1px 1px 0 #9a9a9a,0 0 0 .5px #999"></div>
<span style='left:1752.01px;top:880px;font:bold 19.3px/1 "DejaVu Serif","Liberation Serif",serif;color:#0000ff;letter-spacing:0.008px;-webkit-text-stroke:.25px #0000ff;'>0,00</span>
<span style='left:1803px;top:860.7px;font:13px/1 "Liberation Sans",sans-serif;color:#111;letter-spacing:0.262px;-webkit-text-stroke:.35px #111;'>Outros Recbtos</span>
<div style="left:1807px;top:876px;width:111px;height:32px;background:#fff;border:1px solid #6b6b6b;box-shadow:inset 1px 1px 0 #9a9a9a,0 0 0 .5px #999"></div>
<span style='left:1842.87px;top:880px;font:bold 19.3px/1 "DejaVu Serif","Liberation Serif",serif;color:#ff0000;letter-spacing:-0.133px;-webkit-text-stroke:.25px #ff0000;'>141,84</span>
</div>
<div id="dim"></div>
<div id="hole"><div id="holein">
<div style="left:-20px;top:51.5px;width:1954px;height:984px;background:#f0f0f0"></div>
<div style="left:195px;top:421px;width:566px;height:26px;background:#fff;border:1px solid #6b6b6b;box-shadow:inset 1px 1px 0 #9a9a9a,0 0 0 .5px #999"></div>
<div style="left:766px;top:421px;width:178px;height:26px;background:#fff;border:1px solid #6b6b6b;box-shadow:inset 1px 1px 0 #9a9a9a,0 0 0 .5px #999"></div>
<div style="left:947px;top:421px;width:49px;height:26px;background:#fff;border:1px solid #6b6b6b;box-shadow:inset 1px 1px 0 #9a9a9a,0 0 0 .5px #999"></div>
<div style="left:1002px;top:420px;width:31px;height:26px;background:linear-gradient(#fafafa,#e9e9e9);border:2px solid #3a6ca4;border-radius:4.5px"></div>
<div style="left:1042px;top:421px;width:271px;height:26px;background:#fff;border:1px solid #6b6b6b;box-shadow:inset 1px 1px 0 #9a9a9a,0 0 0 .5px #999"></div>
<div style="left:649px;top:471px;width:114px;height:26px;background:#fff;border:1px solid #6b6b6b;box-shadow:inset 1px 1px 0 #9a9a9a,0 0 0 .5px #999"></div>
<span style='left:723.36px;top:477px;font:bold 15px/1 "DejaVu Serif","Liberation Serif",serif;color:#ff0000;letter-spacing:-0.137px;-webkit-text-stroke:.25px #ff0000;'>0,00</span>
<div style="left:9.6px;top:526px;width:1697.5px;height:261px;background:#fff;border:1.2px solid #484848;box-sizing:border-box"></div>
<div style="left:10px;top:622.05px;width:1676px;height:23.75px;background:#00ffff"></div>
<div style="left:614px;top:527px;width:190px;height:24px;background:#f0f0f0;border-right:1.5px solid #333;border-bottom:2px solid #333;border-left:1px solid #fff;box-sizing:border-box"></div>
<div style="left:804px;top:527px;width:120.5px;height:24px;background:#f0f0f0;border-right:1.5px solid #333;border-bottom:2px solid #333;border-left:1px solid #fff;box-sizing:border-box"></div>
<span style='left:871.86px;top:532px;font:bold 16px/1 "DejaVu Sans","Liberation Sans",sans-serif;color:#111;'>Qtde.</span>
<div style="left:924.5px;top:527px;width:161.5px;height:24px;background:#f0f0f0;border-right:1.5px solid #333;border-bottom:2px solid #333;border-left:1px solid #fff;box-sizing:border-box"></div>
<span style='left:989.3px;top:532px;font:bold 16px/1 "DejaVu Sans","Liberation Sans",sans-serif;color:#111;'>Preço Tab.</span>
<div style="left:1086px;top:527px;width:142.5px;height:24px;background:#f0f0f0;border-right:1.5px solid #333;border-bottom:2px solid #333;border-left:1px solid #fff;box-sizing:border-box"></div>
<span style='left:1154.67px;top:532px;font:bold 16px/1 "DejaVu Sans","Liberation Sans",sans-serif;color:#111;'>% Desc.</span>
<div style="left:10px;top:574px;width:1676px;height:1px;background:#4c4c4c"></div>
<div style="left:10px;top:598px;width:1676px;height:1px;background:#4c4c4c"></div>
<div style="left:10px;top:621px;width:1676px;height:1px;background:#4c4c4c"></div>
<div style="left:804px;top:550.8px;width:1px;height:235px;background:#4c4c4c"></div>
<div style="left:924px;top:550.8px;width:1px;height:235px;background:#4c4c4c"></div>
<div style="left:1086px;top:550.8px;width:1px;height:235px;background:#4c4c4c"></div>
<span style='left:876.38px;top:555.8px;font:15.7px/1 "DejaVu Sans","Liberation Sans",sans-serif;color:#ff0000;letter-spacing:0.050px;'>2,000</span>
<span style='left:1047.91px;top:555.8px;font:15.7px/1 "DejaVu Sans","Liberation Sans",sans-serif;color:#ff0000;letter-spacing:0.050px;'>7,49</span>
<span style='left:1170.34px;top:555.8px;font:15.7px/1 "DejaVu Sans","Liberation Sans",sans-serif;color:#ff0000;letter-spacing:0.050px;'>0,0000</span>
<span style='left:618px;top:579.55px;font:15.7px/1 "DejaVu Sans","Liberation Sans",sans-serif;color:#ff0000;letter-spacing:0.460px;max-width:185px;overflow:hidden;white-space:pre;'>BARRIND INDUSTRIA</span>
<span style='left:876.38px;top:579.55px;font:15.7px/1 "DejaVu Sans","Liberation Sans",sans-serif;color:#ff0000;letter-spacing:0.050px;'>3,000</span>
<span style='left:1047.91px;top:579.55px;font:15.7px/1 "DejaVu Sans","Liberation Sans",sans-serif;color:#ff0000;letter-spacing:0.050px;'>8,95</span>
<span style='left:1170.34px;top:579.55px;font:15.7px/1 "DejaVu Sans","Liberation Sans",sans-serif;color:#ff0000;letter-spacing:0.050px;'>0,0000</span>
<span style='left:618px;top:603.3px;font:15.7px/1 "DejaVu Sans","Liberation Sans",sans-serif;color:#ff0000;letter-spacing:0.460px;max-width:185px;overflow:hidden;white-space:pre;'>IMOBILIZADO CONSUMO</span>
<span style='left:876.38px;top:603.3px;font:15.7px/1 "DejaVu Sans","Liberation Sans",sans-serif;color:#ff0000;letter-spacing:0.050px;'>1,000</span>
<span style='left:1047.91px;top:603.3px;font:15.7px/1 "DejaVu Sans","Liberation Sans",sans-serif;color:#ff0000;letter-spacing:0.050px;'>5,99</span>
<span style='left:1170.34px;top:603.3px;font:15.7px/1 "DejaVu Sans","Liberation Sans",sans-serif;color:#ff0000;letter-spacing:0.050px;'>0,0000</span>
<span style='left:876.38px;top:627.05px;font:15.7px/1 "DejaVu Sans","Liberation Sans",sans-serif;color:#ff0000;letter-spacing:0.050px;'>1,000</span>
<span style='left:1037.88px;top:627.05px;font:15.7px/1 "DejaVu Sans","Liberation Sans",sans-serif;color:#ff0000;letter-spacing:0.050px;'>94,02</span>
<span style='left:1170.34px;top:627.05px;font:15.7px/1 "DejaVu Sans","Liberation Sans",sans-serif;color:#ff0000;letter-spacing:0.050px;'>0,0000</span>
</div></div>
<div id="shadow"></div>
<div id="dlg">
<div class="tb"></div><div class="tt">Pergunta - Versão: 25.09.2608I - [26/09/2025 17:04]</div>
<svg style="position:absolute;left:418px;top:10px" width="12" height="12"><path d="M1 1L11 11M11 1L1 11" stroke="#c4c4c4" stroke-width="1.1"/></svg>
<svg style="position:absolute;left:24px;top:59px" width="52" height="52" viewBox="0 0 52 52"><defs><radialGradient id="qg" cx=".4" cy=".25" r=".85"><stop offset="0" stop-color="#5a86e8"/><stop offset=".55" stop-color="#1a44b0"/><stop offset="1" stop-color="#0a2478"/></radialGradient><linearGradient id="qr" x1="0" y1="0" x2="0" y2="1"><stop offset="0" stop-color="#f4f4f4"/><stop offset="1" stop-color="#8a8a8a"/></linearGradient></defs><circle cx="26" cy="26" r="23.5" fill="url(#qr)" stroke="#777" stroke-width=".8"/><circle cx="26" cy="26" r="20.8" fill="url(#qg)"/><ellipse cx="26" cy="16" rx="16" ry="10" fill="#fff" opacity=".16"/><text x="26" y="40.6" text-anchor="middle" font-family="Liberation Sans,sans-serif" font-weight="bold" font-size="40" fill="#fff">?</text></svg>
<div class="msg">Orçamento salvo com sucesso. Deseja imprimir este<br>orçamento?</div>
<div class="ft"></div>
<div class="btn" style="left:231px">Sim</div>
<div class="btn" style="left:334px">Não</div>
<svg style="position:absolute;left:247px;top:154px" width="16" height="24" viewBox="0 0 16 24"><path d="M1 1V18L5 14.2L8 21L10.6 19.9L7.7 13.2H13Z" fill="#fff" stroke="#000" stroke-width="1.1"/></svg>
</div>

</body></html>
